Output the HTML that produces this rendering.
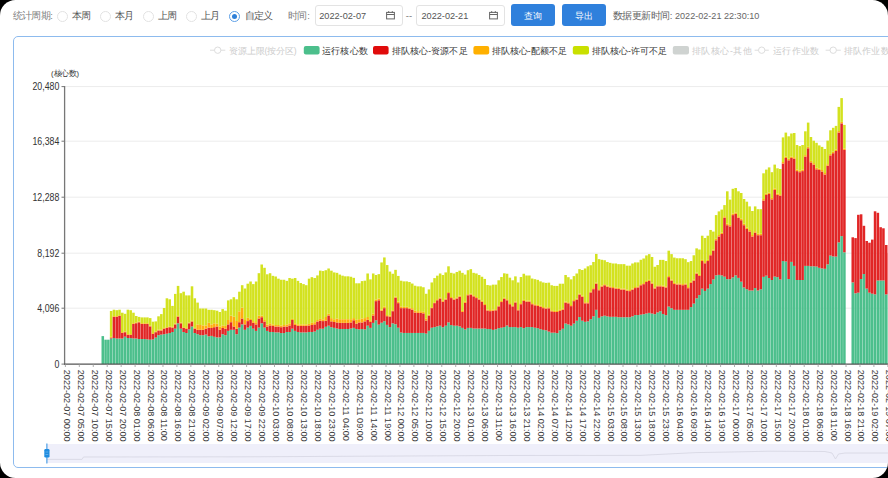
<!DOCTYPE html>
<html><head><meta charset="utf-8">
<style>
html,body{margin:0;padding:0;background:#000;}
#page{position:relative;width:888px;height:478px;overflow:hidden;background:#fff;border-radius:15.5px;font-family:"Liberation Sans",sans-serif;}
.radio{position:absolute;width:9px;height:9px;border:1px solid #e2e2e2;border-radius:50%;top:10.5px;background:#fff;}
.radio.on{border-color:#5d9fe6;}
.radio.on::after{content:"";position:absolute;left:2px;top:2px;width:5px;height:5px;border-radius:50%;background:#2f80d8;}
.inp{position:absolute;top:4.5px;height:19px;border:1px solid #e3e3e3;border-radius:3px;background:#fff;}
.btn{position:absolute;top:4.3px;height:21.4px;background:#2f80dc;border-radius:3px;}
svg text{font-family:"Liberation Sans",sans-serif;}
</style></head><body>
<div id="page">
<div class="radio" style="left:57.4px"></div>
<div class="radio" style="left:99.7px"></div>
<div class="radio" style="left:143px"></div>
<div class="radio" style="left:186px"></div>
<div class="radio on" style="left:228.7px"></div>
<div class="inp" style="left:314.6px;width:86px"></div>
<div class="inp" style="left:416.4px;width:86.5px"></div>
<svg style="position:absolute;left:386px;top:11px" width="9" height="8.5" viewBox="0 0 9 8.5"><rect x="0.6" y="1.4" width="7.8" height="6.5" fill="none" stroke="#666" stroke-width="1"/><line x1="0.6" y1="3.5" x2="8.4" y2="3.5" stroke="#666" stroke-width="1"/><line x1="2.7" y1="0" x2="2.7" y2="2" stroke="#666" stroke-width="0.9"/><line x1="6.3" y1="0" x2="6.3" y2="2" stroke="#666" stroke-width="0.9"/></svg>
<svg style="position:absolute;left:488.8px;top:11px" width="9" height="8.5" viewBox="0 0 9 8.5"><rect x="0.6" y="1.4" width="7.8" height="6.5" fill="none" stroke="#666" stroke-width="1"/><line x1="0.6" y1="3.5" x2="8.4" y2="3.5" stroke="#666" stroke-width="1"/><line x1="2.7" y1="0" x2="2.7" y2="2" stroke="#666" stroke-width="0.9"/><line x1="6.3" y1="0" x2="6.3" y2="2" stroke="#666" stroke-width="0.9"/></svg>
<div class="btn" style="left:511.4px;width:43.8px"></div>
<div class="btn" style="left:561.8px;width:43.9px"></div>
<div style="position:absolute;left:13px;top:35.5px;width:900px;height:430.7px;border:1.3px solid #8dbbee;border-radius:5px;"></div>
<svg style="position:absolute;left:0;top:0" width="888" height="478" viewBox="0 0 888 478">
<text x="12.70 22.09 31.48 40.87 50.26" y="19.4" font-size="9.5" fill="#808080" >统计周期:</text><text x="71.80 81.49" y="19.4" font-size="9.5" fill="#555" >本周</text><text x="114.90 124.12" y="19.4" font-size="9.5" fill="#555" >本月</text><text x="157.70 167.39" y="19.4" font-size="9.5" fill="#555" >上周</text><text x="200.80 210.02" y="19.4" font-size="9.5" fill="#555" >上月</text><text x="244.70 253.71 262.71" y="19.4" font-size="9.5" fill="#555" >自定义</text><text x="287.60 297.47 307.35" y="19.4" font-size="9.5" fill="#808080" >时间:</text><text x="319.2" y="19.1" font-size="9.3" fill="#555" textLength="46.9" lengthAdjust="spacingAndGlyphs">2022-02-07</text><text x="405.8" y="18.6" font-size="9.5" fill="#777">--</text><text x="421.5" y="19.1" font-size="9.3" fill="#555" textLength="46.8" lengthAdjust="spacingAndGlyphs">2022-02-21</text><text x="524.00 533.27" y="18.6" font-size="8.8" fill="#fff" >查询</text><text x="574.50 584.14" y="18.6" font-size="8.8" fill="#fff" >导出</text><text x="612.50 622.05 631.61 641.16 650.71 660.27 669.82" y="19.4" font-size="9.5" fill="#666" >数据更新时间:</text><text x="675" y="19.1" font-size="9.3" fill="#666" textLength="84.3" lengthAdjust="spacingAndGlyphs">2022-02-21 22:30:10</text>
<line x1="210" y1="50.2" x2="225.3" y2="50.2" stroke="#ddd" stroke-width="1"/><circle cx="217.7" cy="50.2" r="3.2" fill="#fff" stroke="#ddd"/><text x="229.40 238.18 246.97 255.75 264.54 267.46 276.25 285.03 293.81" y="53.5" font-size="8.6" fill="#ccc" >资源上限(按分区)</text><rect x="303.8" y="46" width="15.8" height="8.5" rx="2" fill="#4cbf8c"/><text x="322.00 331.19 340.37 349.56 358.75" y="53.5" font-size="8.6" fill="#333" >运行核心数</text><rect x="373" y="46" width="15.6" height="8.5" rx="2" fill="#e00b0b"/><text x="391.90 400.99 410.08 419.16 428.25 431.28 440.36 449.45 458.54" y="53.5" font-size="8.6" fill="#333" >排队核心-资源不足</text><rect x="473.4" y="46" width="15.8" height="8.5" rx="2" fill="#ffb000"/><text x="491.60 500.66 509.73 518.79 527.85 530.87 539.93 549.00 558.06" y="53.5" font-size="8.6" fill="#333" >排队核心-配额不足</text><rect x="572.8" y="46" width="16.2" height="8.5" rx="2" fill="#c9e000"/><text x="591.70 600.79 609.88 618.96 628.05 631.08 640.16 649.25 658.34" y="53.5" font-size="8.6" fill="#333" >排队核心-许可不足</text><rect x="672.8" y="46" width="16.2" height="8.5" rx="2" fill="#cfd3d1"/><text x="691.60 701.20 710.79 720.39 729.98 733.18 742.77" y="53.5" font-size="8.6" fill="#ccc" >排队核心-其他</text><line x1="754.6" y1="50.2" x2="768.8" y2="50.2" stroke="#ddd" stroke-width="1"/><circle cx="761.7" cy="50.2" r="3.2" fill="#fff" stroke="#ddd"/><text x="773.30 782.49 791.67 800.86 810.05" y="53.5" font-size="8.6" fill="#ccc" >运行作业数</text><line x1="825.6" y1="50.2" x2="840.8" y2="50.2" stroke="#ddd" stroke-width="1"/><circle cx="833.2" cy="50.2" r="3.2" fill="#fff" stroke="#ddd"/><text x="843.80 852.99 862.17 871.36 880.55" y="53.5" font-size="8.6" fill="#ccc" >排队作业数</text>
<text x="51.00 53.54 61.17 68.81 76.44" y="75.7" font-size="7.6" fill="#333" >(核心数)</text>
<line x1="65" y1="308.2" x2="888" y2="308.2" stroke="#ececec" stroke-width="1"/><line x1="65" y1="253.2" x2="888" y2="253.2" stroke="#ececec" stroke-width="1"/><line x1="65" y1="197.2" x2="888" y2="197.2" stroke="#ececec" stroke-width="1"/><line x1="65" y1="141.2" x2="888" y2="141.2" stroke="#ececec" stroke-width="1"/><line x1="65" y1="86.6" x2="888" y2="86.6" stroke="#ececec" stroke-width="1"/>
<g font-size="8.8" fill="#333"><text transform="translate(59.3,367.7) scale(1,1.15)" text-anchor="end">0</text><line x1="61.5" y1="364.1" x2="64.6" y2="364.1" stroke="#777" stroke-width="1"/><text transform="translate(59.3,311.8) scale(1,1.15)" text-anchor="end">4,096</text><line x1="61.5" y1="308.2" x2="64.6" y2="308.2" stroke="#777" stroke-width="1"/><text transform="translate(59.3,256.8) scale(1,1.15)" text-anchor="end">8,192</text><line x1="61.5" y1="253.2" x2="64.6" y2="253.2" stroke="#777" stroke-width="1"/><text transform="translate(59.3,200.8) scale(1,1.15)" text-anchor="end">12,288</text><line x1="61.5" y1="197.2" x2="64.6" y2="197.2" stroke="#777" stroke-width="1"/><text transform="translate(59.3,144.8) scale(1,1.15)" text-anchor="end">16,384</text><line x1="61.5" y1="141.2" x2="64.6" y2="141.2" stroke="#777" stroke-width="1"/><text transform="translate(59.3,90.2) scale(1,1.15)" text-anchor="end">20,480</text><line x1="61.5" y1="86.6" x2="64.6" y2="86.6" stroke="#777" stroke-width="1"/></g>
<rect x="101.51" y="336.10" width="2.55" height="28.00" fill="#4cbf8c"/>
<rect x="104.30" y="339.70" width="2.55" height="24.40" fill="#4cbf8c"/>
<rect x="107.09" y="339.70" width="2.55" height="24.40" fill="#4cbf8c"/>
<rect x="109.88" y="338.50" width="2.55" height="25.60" fill="#4cbf8c"/>
<rect x="109.88" y="337.60" width="2.55" height="0.90" fill="#e12626"/>
<rect x="109.88" y="336.80" width="2.55" height="0.80" fill="#ffad0f"/>
<rect x="109.88" y="311.00" width="2.55" height="25.80" fill="#d3e21f"/>
<rect x="112.66" y="338.00" width="2.55" height="26.10" fill="#4cbf8c"/>
<rect x="112.66" y="316.90" width="2.55" height="21.10" fill="#e12626"/>
<rect x="112.66" y="316.10" width="2.55" height="0.80" fill="#ffad0f"/>
<rect x="112.66" y="309.70" width="2.55" height="6.40" fill="#d3e21f"/>
<rect x="115.45" y="338.50" width="2.55" height="25.60" fill="#4cbf8c"/>
<rect x="115.45" y="316.90" width="2.55" height="21.60" fill="#e12626"/>
<rect x="115.45" y="316.10" width="2.55" height="0.80" fill="#ffad0f"/>
<rect x="115.45" y="310.20" width="2.55" height="5.90" fill="#d3e21f"/>
<rect x="118.24" y="338.50" width="2.55" height="25.60" fill="#4cbf8c"/>
<rect x="118.24" y="316.00" width="2.55" height="22.50" fill="#e12626"/>
<rect x="118.24" y="315.20" width="2.55" height="0.80" fill="#ffad0f"/>
<rect x="118.24" y="309.70" width="2.55" height="5.50" fill="#d3e21f"/>
<rect x="121.03" y="338.50" width="2.55" height="25.60" fill="#4cbf8c"/>
<rect x="121.03" y="333.00" width="2.55" height="5.50" fill="#e12626"/>
<rect x="121.03" y="332.20" width="2.55" height="0.80" fill="#ffad0f"/>
<rect x="121.03" y="312.70" width="2.55" height="19.50" fill="#d3e21f"/>
<rect x="123.82" y="336.70" width="2.55" height="27.40" fill="#4cbf8c"/>
<rect x="123.82" y="332.20" width="2.55" height="4.50" fill="#e12626"/>
<rect x="123.82" y="331.40" width="2.55" height="0.80" fill="#ffad0f"/>
<rect x="123.82" y="313.80" width="2.55" height="17.60" fill="#d3e21f"/>
<rect x="126.61" y="338.00" width="2.55" height="26.10" fill="#4cbf8c"/>
<rect x="126.61" y="334.90" width="2.55" height="3.10" fill="#e12626"/>
<rect x="126.61" y="334.10" width="2.55" height="0.80" fill="#ffad0f"/>
<rect x="126.61" y="309.70" width="2.55" height="24.40" fill="#d3e21f"/>
<rect x="129.39" y="338.10" width="2.55" height="26.00" fill="#4cbf8c"/>
<rect x="129.39" y="334.90" width="2.55" height="3.20" fill="#e12626"/>
<rect x="129.39" y="334.10" width="2.55" height="0.80" fill="#ffad0f"/>
<rect x="129.39" y="310.20" width="2.55" height="23.90" fill="#d3e21f"/>
<rect x="132.18" y="338.50" width="2.55" height="25.60" fill="#4cbf8c"/>
<rect x="132.18" y="324.00" width="2.55" height="14.50" fill="#e12626"/>
<rect x="132.18" y="323.20" width="2.55" height="0.80" fill="#ffad0f"/>
<rect x="132.18" y="312.70" width="2.55" height="10.50" fill="#d3e21f"/>
<rect x="134.97" y="338.50" width="2.55" height="25.60" fill="#4cbf8c"/>
<rect x="134.97" y="323.20" width="2.55" height="15.30" fill="#e12626"/>
<rect x="134.97" y="322.40" width="2.55" height="0.80" fill="#ffad0f"/>
<rect x="134.97" y="316.00" width="2.55" height="6.40" fill="#d3e21f"/>
<rect x="137.76" y="339.00" width="2.55" height="25.10" fill="#4cbf8c"/>
<rect x="137.76" y="322.30" width="2.55" height="16.70" fill="#e12626"/>
<rect x="137.76" y="321.50" width="2.55" height="0.80" fill="#ffad0f"/>
<rect x="137.76" y="316.90" width="2.55" height="4.60" fill="#d3e21f"/>
<rect x="140.54" y="339.00" width="2.55" height="25.10" fill="#4cbf8c"/>
<rect x="140.54" y="324.00" width="2.55" height="15.00" fill="#e12626"/>
<rect x="140.54" y="323.20" width="2.55" height="0.80" fill="#ffad0f"/>
<rect x="140.54" y="317.40" width="2.55" height="5.80" fill="#d3e21f"/>
<rect x="143.33" y="339.00" width="2.55" height="25.10" fill="#4cbf8c"/>
<rect x="143.33" y="324.00" width="2.55" height="15.00" fill="#e12626"/>
<rect x="143.33" y="323.20" width="2.55" height="0.80" fill="#ffad0f"/>
<rect x="143.33" y="317.40" width="2.55" height="5.80" fill="#d3e21f"/>
<rect x="146.12" y="339.40" width="2.55" height="24.70" fill="#4cbf8c"/>
<rect x="146.12" y="324.00" width="2.55" height="15.40" fill="#e12626"/>
<rect x="146.12" y="323.20" width="2.55" height="0.80" fill="#ffad0f"/>
<rect x="146.12" y="317.40" width="2.55" height="5.80" fill="#d3e21f"/>
<rect x="148.91" y="339.70" width="2.55" height="24.40" fill="#4cbf8c"/>
<rect x="148.91" y="326.40" width="2.55" height="13.30" fill="#e12626"/>
<rect x="148.91" y="325.60" width="2.55" height="0.80" fill="#ffad0f"/>
<rect x="148.91" y="318.10" width="2.55" height="7.50" fill="#d3e21f"/>
<rect x="151.70" y="339.40" width="2.55" height="24.70" fill="#4cbf8c"/>
<rect x="151.70" y="334.00" width="2.55" height="5.40" fill="#e12626"/>
<rect x="151.70" y="333.20" width="2.55" height="0.80" fill="#ffad0f"/>
<rect x="151.70" y="321.70" width="2.55" height="11.50" fill="#d3e21f"/>
<rect x="154.48" y="337.60" width="2.55" height="26.50" fill="#4cbf8c"/>
<rect x="154.48" y="332.20" width="2.55" height="5.40" fill="#e12626"/>
<rect x="154.48" y="331.40" width="2.55" height="0.80" fill="#ffad0f"/>
<rect x="154.48" y="321.40" width="2.55" height="10.00" fill="#d3e21f"/>
<rect x="157.27" y="335.20" width="2.55" height="28.90" fill="#4cbf8c"/>
<rect x="157.27" y="330.50" width="2.55" height="4.70" fill="#e12626"/>
<rect x="157.27" y="329.70" width="2.55" height="0.80" fill="#ffad0f"/>
<rect x="157.27" y="316.30" width="2.55" height="13.40" fill="#d3e21f"/>
<rect x="160.06" y="334.60" width="2.55" height="29.50" fill="#4cbf8c"/>
<rect x="160.06" y="330.50" width="2.55" height="4.10" fill="#e12626"/>
<rect x="160.06" y="329.70" width="2.55" height="0.80" fill="#ffad0f"/>
<rect x="160.06" y="314.10" width="2.55" height="15.60" fill="#d3e21f"/>
<rect x="162.85" y="334.20" width="2.55" height="29.90" fill="#4cbf8c"/>
<rect x="162.85" y="328.70" width="2.55" height="5.50" fill="#e12626"/>
<rect x="162.85" y="327.90" width="2.55" height="0.80" fill="#ffad0f"/>
<rect x="162.85" y="308.00" width="2.55" height="19.90" fill="#d3e21f"/>
<rect x="165.64" y="333.70" width="2.55" height="30.40" fill="#4cbf8c"/>
<rect x="165.64" y="328.00" width="2.55" height="5.70" fill="#e12626"/>
<rect x="165.64" y="327.20" width="2.55" height="0.80" fill="#ffad0f"/>
<rect x="165.64" y="298.30" width="2.55" height="28.90" fill="#d3e21f"/>
<rect x="168.42" y="333.00" width="2.55" height="31.10" fill="#4cbf8c"/>
<rect x="168.42" y="327.20" width="2.55" height="5.80" fill="#e12626"/>
<rect x="168.42" y="326.40" width="2.55" height="0.80" fill="#ffad0f"/>
<rect x="168.42" y="299.30" width="2.55" height="27.10" fill="#d3e21f"/>
<rect x="171.21" y="332.00" width="2.55" height="32.10" fill="#4cbf8c"/>
<rect x="171.21" y="327.60" width="2.55" height="4.40" fill="#e12626"/>
<rect x="171.21" y="326.80" width="2.55" height="0.80" fill="#ffad0f"/>
<rect x="171.21" y="305.90" width="2.55" height="20.90" fill="#d3e21f"/>
<rect x="174.00" y="328.70" width="2.55" height="35.40" fill="#4cbf8c"/>
<rect x="174.00" y="324.40" width="2.55" height="4.30" fill="#e12626"/>
<rect x="174.00" y="323.60" width="2.55" height="0.80" fill="#ffad0f"/>
<rect x="174.00" y="293.90" width="2.55" height="29.70" fill="#d3e21f"/>
<rect x="176.79" y="323.30" width="2.55" height="40.80" fill="#4cbf8c"/>
<rect x="176.79" y="316.70" width="2.55" height="6.60" fill="#e12626"/>
<rect x="176.79" y="315.90" width="2.55" height="0.80" fill="#ffad0f"/>
<rect x="176.79" y="285.90" width="2.55" height="30.00" fill="#d3e21f"/>
<rect x="179.58" y="328.70" width="2.55" height="35.40" fill="#4cbf8c"/>
<rect x="179.58" y="323.30" width="2.55" height="5.40" fill="#e12626"/>
<rect x="179.58" y="322.50" width="2.55" height="0.80" fill="#ffad0f"/>
<rect x="179.58" y="293.20" width="2.55" height="29.30" fill="#d3e21f"/>
<rect x="182.36" y="332.00" width="2.55" height="32.10" fill="#4cbf8c"/>
<rect x="182.36" y="328.00" width="2.55" height="4.00" fill="#e12626"/>
<rect x="182.36" y="327.20" width="2.55" height="0.80" fill="#ffad0f"/>
<rect x="182.36" y="291.70" width="2.55" height="35.50" fill="#d3e21f"/>
<rect x="185.15" y="333.00" width="2.55" height="31.10" fill="#4cbf8c"/>
<rect x="185.15" y="328.70" width="2.55" height="4.30" fill="#e12626"/>
<rect x="185.15" y="327.90" width="2.55" height="0.80" fill="#ffad0f"/>
<rect x="185.15" y="295.40" width="2.55" height="32.50" fill="#d3e21f"/>
<rect x="187.94" y="329.40" width="2.55" height="34.70" fill="#4cbf8c"/>
<rect x="187.94" y="323.30" width="2.55" height="6.10" fill="#e12626"/>
<rect x="187.94" y="322.50" width="2.55" height="0.80" fill="#ffad0f"/>
<rect x="187.94" y="295.40" width="2.55" height="27.10" fill="#d3e21f"/>
<rect x="190.73" y="326.50" width="2.55" height="37.60" fill="#4cbf8c"/>
<rect x="190.73" y="321.50" width="2.55" height="5.00" fill="#e12626"/>
<rect x="190.73" y="320.70" width="2.55" height="0.80" fill="#ffad0f"/>
<rect x="190.73" y="286.30" width="2.55" height="34.40" fill="#d3e21f"/>
<rect x="193.52" y="333.00" width="2.55" height="31.10" fill="#4cbf8c"/>
<rect x="193.52" y="328.70" width="2.55" height="4.30" fill="#e12626"/>
<rect x="193.52" y="327.90" width="2.55" height="0.80" fill="#ffad0f"/>
<rect x="193.52" y="298.30" width="2.55" height="29.60" fill="#d3e21f"/>
<rect x="196.31" y="334.20" width="2.55" height="29.90" fill="#4cbf8c"/>
<rect x="196.31" y="329.80" width="2.55" height="4.40" fill="#e12626"/>
<rect x="196.31" y="324.40" width="2.55" height="5.40" fill="#ffad0f"/>
<rect x="196.31" y="302.60" width="2.55" height="21.80" fill="#d3e21f"/>
<rect x="199.09" y="335.20" width="2.55" height="28.90" fill="#4cbf8c"/>
<rect x="199.09" y="329.80" width="2.55" height="5.40" fill="#e12626"/>
<rect x="199.09" y="325.00" width="2.55" height="4.80" fill="#ffad0f"/>
<rect x="199.09" y="308.50" width="2.55" height="16.50" fill="#d3e21f"/>
<rect x="201.88" y="335.20" width="2.55" height="28.90" fill="#4cbf8c"/>
<rect x="201.88" y="329.80" width="2.55" height="5.40" fill="#e12626"/>
<rect x="201.88" y="325.40" width="2.55" height="4.40" fill="#ffad0f"/>
<rect x="201.88" y="308.50" width="2.55" height="16.90" fill="#d3e21f"/>
<rect x="204.67" y="334.60" width="2.55" height="29.50" fill="#4cbf8c"/>
<rect x="204.67" y="328.70" width="2.55" height="5.90" fill="#e12626"/>
<rect x="204.67" y="325.40" width="2.55" height="3.30" fill="#ffad0f"/>
<rect x="204.67" y="308.50" width="2.55" height="16.90" fill="#d3e21f"/>
<rect x="207.46" y="336.30" width="2.55" height="27.80" fill="#4cbf8c"/>
<rect x="207.46" y="327.60" width="2.55" height="8.70" fill="#e12626"/>
<rect x="207.46" y="322.80" width="2.55" height="4.80" fill="#ffad0f"/>
<rect x="207.46" y="309.80" width="2.55" height="13.00" fill="#d3e21f"/>
<rect x="210.25" y="335.90" width="2.55" height="28.20" fill="#4cbf8c"/>
<rect x="210.25" y="328.00" width="2.55" height="7.90" fill="#e12626"/>
<rect x="210.25" y="324.40" width="2.55" height="3.60" fill="#ffad0f"/>
<rect x="210.25" y="309.80" width="2.55" height="14.60" fill="#d3e21f"/>
<rect x="213.03" y="336.80" width="2.55" height="27.30" fill="#4cbf8c"/>
<rect x="213.03" y="327.20" width="2.55" height="9.60" fill="#e12626"/>
<rect x="213.03" y="323.30" width="2.55" height="3.90" fill="#ffad0f"/>
<rect x="213.03" y="310.20" width="2.55" height="13.10" fill="#d3e21f"/>
<rect x="215.82" y="337.40" width="2.55" height="26.70" fill="#4cbf8c"/>
<rect x="215.82" y="326.50" width="2.55" height="10.90" fill="#e12626"/>
<rect x="215.82" y="323.70" width="2.55" height="2.80" fill="#ffad0f"/>
<rect x="215.82" y="310.70" width="2.55" height="13.00" fill="#d3e21f"/>
<rect x="218.61" y="337.40" width="2.55" height="26.70" fill="#4cbf8c"/>
<rect x="218.61" y="329.80" width="2.55" height="7.60" fill="#e12626"/>
<rect x="218.61" y="326.50" width="2.55" height="3.30" fill="#ffad0f"/>
<rect x="218.61" y="312.00" width="2.55" height="14.50" fill="#d3e21f"/>
<rect x="221.40" y="334.20" width="2.55" height="29.90" fill="#4cbf8c"/>
<rect x="221.40" y="328.00" width="2.55" height="6.20" fill="#e12626"/>
<rect x="221.40" y="325.40" width="2.55" height="2.60" fill="#ffad0f"/>
<rect x="221.40" y="309.10" width="2.55" height="16.30" fill="#d3e21f"/>
<rect x="224.19" y="335.20" width="2.55" height="28.90" fill="#4cbf8c"/>
<rect x="224.19" y="328.70" width="2.55" height="6.50" fill="#e12626"/>
<rect x="224.19" y="325.90" width="2.55" height="2.80" fill="#ffad0f"/>
<rect x="224.19" y="310.70" width="2.55" height="15.20" fill="#d3e21f"/>
<rect x="226.97" y="330.90" width="2.55" height="33.20" fill="#4cbf8c"/>
<rect x="226.97" y="324.40" width="2.55" height="6.50" fill="#e12626"/>
<rect x="226.97" y="320.00" width="2.55" height="4.40" fill="#ffad0f"/>
<rect x="226.97" y="300.40" width="2.55" height="19.60" fill="#d3e21f"/>
<rect x="229.76" y="329.80" width="2.55" height="34.30" fill="#4cbf8c"/>
<rect x="229.76" y="322.20" width="2.55" height="7.60" fill="#e12626"/>
<rect x="229.76" y="315.70" width="2.55" height="6.50" fill="#ffad0f"/>
<rect x="229.76" y="299.30" width="2.55" height="16.40" fill="#d3e21f"/>
<rect x="232.55" y="329.80" width="2.55" height="34.30" fill="#4cbf8c"/>
<rect x="232.55" y="326.50" width="2.55" height="3.30" fill="#e12626"/>
<rect x="232.55" y="316.70" width="2.55" height="9.80" fill="#ffad0f"/>
<rect x="232.55" y="297.20" width="2.55" height="19.50" fill="#d3e21f"/>
<rect x="235.34" y="334.20" width="2.55" height="29.90" fill="#4cbf8c"/>
<rect x="235.34" y="328.70" width="2.55" height="5.50" fill="#e12626"/>
<rect x="235.34" y="321.00" width="2.55" height="7.70" fill="#ffad0f"/>
<rect x="235.34" y="299.30" width="2.55" height="21.70" fill="#d3e21f"/>
<rect x="238.12" y="327.60" width="2.55" height="36.50" fill="#4cbf8c"/>
<rect x="238.12" y="322.20" width="2.55" height="5.40" fill="#e12626"/>
<rect x="238.12" y="311.30" width="2.55" height="10.90" fill="#ffad0f"/>
<rect x="238.12" y="291.70" width="2.55" height="19.60" fill="#d3e21f"/>
<rect x="240.91" y="324.40" width="2.55" height="39.70" fill="#4cbf8c"/>
<rect x="240.91" y="318.50" width="2.55" height="5.90" fill="#e12626"/>
<rect x="240.91" y="307.60" width="2.55" height="10.90" fill="#ffad0f"/>
<rect x="240.91" y="285.20" width="2.55" height="22.40" fill="#d3e21f"/>
<rect x="243.70" y="329.80" width="2.55" height="34.30" fill="#4cbf8c"/>
<rect x="243.70" y="324.40" width="2.55" height="5.40" fill="#e12626"/>
<rect x="243.70" y="320.00" width="2.55" height="4.40" fill="#ffad0f"/>
<rect x="243.70" y="288.50" width="2.55" height="31.50" fill="#d3e21f"/>
<rect x="246.49" y="327.60" width="2.55" height="36.50" fill="#4cbf8c"/>
<rect x="246.49" y="321.10" width="2.55" height="6.50" fill="#e12626"/>
<rect x="246.49" y="317.80" width="2.55" height="3.30" fill="#ffad0f"/>
<rect x="246.49" y="283.70" width="2.55" height="34.10" fill="#d3e21f"/>
<rect x="249.28" y="325.90" width="2.55" height="38.20" fill="#4cbf8c"/>
<rect x="249.28" y="320.00" width="2.55" height="5.90" fill="#e12626"/>
<rect x="249.28" y="318.90" width="2.55" height="1.10" fill="#ffad0f"/>
<rect x="249.28" y="281.50" width="2.55" height="37.40" fill="#d3e21f"/>
<rect x="252.06" y="328.70" width="2.55" height="35.40" fill="#4cbf8c"/>
<rect x="252.06" y="322.80" width="2.55" height="5.90" fill="#e12626"/>
<rect x="252.06" y="321.10" width="2.55" height="1.70" fill="#ffad0f"/>
<rect x="252.06" y="284.10" width="2.55" height="37.00" fill="#d3e21f"/>
<rect x="254.85" y="330.90" width="2.55" height="33.20" fill="#4cbf8c"/>
<rect x="254.85" y="324.40" width="2.55" height="6.50" fill="#e12626"/>
<rect x="254.85" y="322.20" width="2.55" height="2.20" fill="#ffad0f"/>
<rect x="254.85" y="281.50" width="2.55" height="40.70" fill="#d3e21f"/>
<rect x="257.64" y="327.60" width="2.55" height="36.50" fill="#4cbf8c"/>
<rect x="257.64" y="318.50" width="2.55" height="9.10" fill="#e12626"/>
<rect x="257.64" y="315.70" width="2.55" height="2.80" fill="#ffad0f"/>
<rect x="257.64" y="273.20" width="2.55" height="42.50" fill="#d3e21f"/>
<rect x="260.43" y="323.30" width="2.55" height="40.80" fill="#4cbf8c"/>
<rect x="260.43" y="317.20" width="2.55" height="6.10" fill="#e12626"/>
<rect x="260.43" y="315.70" width="2.55" height="1.50" fill="#ffad0f"/>
<rect x="260.43" y="264.50" width="2.55" height="51.20" fill="#d3e21f"/>
<rect x="263.22" y="327.60" width="2.55" height="36.50" fill="#4cbf8c"/>
<rect x="263.22" y="321.50" width="2.55" height="6.10" fill="#e12626"/>
<rect x="263.22" y="320.00" width="2.55" height="1.50" fill="#ffad0f"/>
<rect x="263.22" y="267.80" width="2.55" height="52.20" fill="#d3e21f"/>
<rect x="266.00" y="330.90" width="2.55" height="33.20" fill="#4cbf8c"/>
<rect x="266.00" y="326.50" width="2.55" height="4.40" fill="#e12626"/>
<rect x="266.00" y="324.50" width="2.55" height="2.00" fill="#ffad0f"/>
<rect x="266.00" y="274.30" width="2.55" height="50.20" fill="#d3e21f"/>
<rect x="268.79" y="331.98" width="2.55" height="32.12" fill="#4cbf8c"/>
<rect x="268.79" y="325.45" width="2.55" height="6.53" fill="#e12626"/>
<rect x="268.79" y="323.27" width="2.55" height="2.18" fill="#ffad0f"/>
<rect x="268.79" y="273.23" width="2.55" height="50.04" fill="#d3e21f"/>
<rect x="271.58" y="331.98" width="2.55" height="32.12" fill="#4cbf8c"/>
<rect x="271.58" y="325.89" width="2.55" height="6.09" fill="#e12626"/>
<rect x="271.58" y="324.36" width="2.55" height="1.52" fill="#ffad0f"/>
<rect x="271.58" y="275.84" width="2.55" height="48.52" fill="#d3e21f"/>
<rect x="274.37" y="332.41" width="2.55" height="31.69" fill="#4cbf8c"/>
<rect x="274.37" y="326.54" width="2.55" height="5.87" fill="#e12626"/>
<rect x="274.37" y="325.01" width="2.55" height="1.52" fill="#ffad0f"/>
<rect x="274.37" y="276.49" width="2.55" height="48.52" fill="#d3e21f"/>
<rect x="277.16" y="332.41" width="2.55" height="31.69" fill="#4cbf8c"/>
<rect x="277.16" y="326.54" width="2.55" height="5.87" fill="#e12626"/>
<rect x="277.16" y="325.01" width="2.55" height="1.52" fill="#ffad0f"/>
<rect x="277.16" y="278.67" width="2.55" height="46.34" fill="#d3e21f"/>
<rect x="279.95" y="333.07" width="2.55" height="31.03" fill="#4cbf8c"/>
<rect x="279.95" y="327.19" width="2.55" height="5.87" fill="#e12626"/>
<rect x="279.95" y="325.45" width="2.55" height="1.74" fill="#ffad0f"/>
<rect x="279.95" y="279.76" width="2.55" height="45.69" fill="#d3e21f"/>
<rect x="282.73" y="333.07" width="2.55" height="31.03" fill="#4cbf8c"/>
<rect x="282.73" y="326.54" width="2.55" height="6.53" fill="#e12626"/>
<rect x="282.73" y="325.01" width="2.55" height="1.52" fill="#ffad0f"/>
<rect x="282.73" y="279.76" width="2.55" height="45.26" fill="#d3e21f"/>
<rect x="285.52" y="331.98" width="2.55" height="32.12" fill="#4cbf8c"/>
<rect x="285.52" y="326.54" width="2.55" height="5.44" fill="#e12626"/>
<rect x="285.52" y="324.36" width="2.55" height="2.18" fill="#ffad0f"/>
<rect x="285.52" y="280.85" width="2.55" height="43.52" fill="#d3e21f"/>
<rect x="288.31" y="331.98" width="2.55" height="32.12" fill="#4cbf8c"/>
<rect x="288.31" y="325.45" width="2.55" height="6.53" fill="#e12626"/>
<rect x="288.31" y="323.27" width="2.55" height="2.18" fill="#ffad0f"/>
<rect x="288.31" y="278.02" width="2.55" height="45.26" fill="#d3e21f"/>
<rect x="291.10" y="328.71" width="2.55" height="35.39" fill="#4cbf8c"/>
<rect x="291.10" y="320.01" width="2.55" height="8.70" fill="#e12626"/>
<rect x="291.10" y="318.92" width="2.55" height="1.09" fill="#ffad0f"/>
<rect x="291.10" y="278.67" width="2.55" height="40.25" fill="#d3e21f"/>
<rect x="293.88" y="330.89" width="2.55" height="33.21" fill="#4cbf8c"/>
<rect x="293.88" y="325.01" width="2.55" height="5.87" fill="#e12626"/>
<rect x="293.88" y="323.27" width="2.55" height="1.74" fill="#ffad0f"/>
<rect x="293.88" y="278.02" width="2.55" height="45.26" fill="#d3e21f"/>
<rect x="296.67" y="331.98" width="2.55" height="32.12" fill="#4cbf8c"/>
<rect x="296.67" y="325.89" width="2.55" height="6.09" fill="#e12626"/>
<rect x="296.67" y="324.36" width="2.55" height="1.52" fill="#ffad0f"/>
<rect x="296.67" y="280.85" width="2.55" height="43.52" fill="#d3e21f"/>
<rect x="299.46" y="332.41" width="2.55" height="31.69" fill="#4cbf8c"/>
<rect x="299.46" y="325.89" width="2.55" height="6.53" fill="#e12626"/>
<rect x="299.46" y="324.36" width="2.55" height="1.52" fill="#ffad0f"/>
<rect x="299.46" y="283.02" width="2.55" height="41.34" fill="#d3e21f"/>
<rect x="302.25" y="332.41" width="2.55" height="31.69" fill="#4cbf8c"/>
<rect x="302.25" y="325.89" width="2.55" height="6.53" fill="#e12626"/>
<rect x="302.25" y="324.36" width="2.55" height="1.52" fill="#ffad0f"/>
<rect x="302.25" y="284.11" width="2.55" height="40.25" fill="#d3e21f"/>
<rect x="305.04" y="332.41" width="2.55" height="31.69" fill="#4cbf8c"/>
<rect x="305.04" y="325.89" width="2.55" height="6.53" fill="#e12626"/>
<rect x="305.04" y="324.36" width="2.55" height="1.52" fill="#ffad0f"/>
<rect x="305.04" y="285.20" width="2.55" height="39.16" fill="#d3e21f"/>
<rect x="307.83" y="331.98" width="2.55" height="32.12" fill="#4cbf8c"/>
<rect x="307.83" y="325.45" width="2.55" height="6.53" fill="#e12626"/>
<rect x="307.83" y="323.93" width="2.55" height="1.52" fill="#ffad0f"/>
<rect x="307.83" y="278.67" width="2.55" height="45.26" fill="#d3e21f"/>
<rect x="310.61" y="331.98" width="2.55" height="32.12" fill="#4cbf8c"/>
<rect x="310.61" y="325.01" width="2.55" height="6.96" fill="#e12626"/>
<rect x="310.61" y="322.84" width="2.55" height="2.18" fill="#ffad0f"/>
<rect x="310.61" y="277.15" width="2.55" height="45.69" fill="#d3e21f"/>
<rect x="313.40" y="331.54" width="2.55" height="32.56" fill="#4cbf8c"/>
<rect x="313.40" y="324.36" width="2.55" height="7.18" fill="#e12626"/>
<rect x="313.40" y="322.19" width="2.55" height="2.18" fill="#ffad0f"/>
<rect x="313.40" y="278.02" width="2.55" height="44.17" fill="#d3e21f"/>
<rect x="316.19" y="329.80" width="2.55" height="34.30" fill="#4cbf8c"/>
<rect x="316.19" y="321.53" width="2.55" height="8.27" fill="#e12626"/>
<rect x="316.19" y="320.01" width="2.55" height="1.52" fill="#ffad0f"/>
<rect x="316.19" y="275.41" width="2.55" height="44.60" fill="#d3e21f"/>
<rect x="318.98" y="328.71" width="2.55" height="35.39" fill="#4cbf8c"/>
<rect x="318.98" y="320.66" width="2.55" height="8.05" fill="#e12626"/>
<rect x="318.98" y="318.92" width="2.55" height="1.74" fill="#ffad0f"/>
<rect x="318.98" y="270.62" width="2.55" height="48.30" fill="#d3e21f"/>
<rect x="321.76" y="328.71" width="2.55" height="35.39" fill="#4cbf8c"/>
<rect x="321.76" y="321.10" width="2.55" height="7.62" fill="#e12626"/>
<rect x="321.76" y="319.36" width="2.55" height="1.74" fill="#ffad0f"/>
<rect x="321.76" y="271.05" width="2.55" height="48.30" fill="#d3e21f"/>
<rect x="324.55" y="326.80" width="2.55" height="37.30" fill="#4cbf8c"/>
<rect x="324.55" y="320.71" width="2.55" height="6.09" fill="#e12626"/>
<rect x="324.55" y="317.01" width="2.55" height="3.70" fill="#ffad0f"/>
<rect x="324.55" y="270.23" width="2.55" height="46.78" fill="#d3e21f"/>
<rect x="327.34" y="325.71" width="2.55" height="38.39" fill="#4cbf8c"/>
<rect x="327.34" y="315.49" width="2.55" height="10.23" fill="#e12626"/>
<rect x="327.34" y="313.75" width="2.55" height="1.74" fill="#ffad0f"/>
<rect x="327.34" y="268.49" width="2.55" height="45.26" fill="#d3e21f"/>
<rect x="330.13" y="327.24" width="2.55" height="36.86" fill="#4cbf8c"/>
<rect x="330.13" y="321.36" width="2.55" height="5.87" fill="#e12626"/>
<rect x="330.13" y="318.10" width="2.55" height="3.26" fill="#ffad0f"/>
<rect x="330.13" y="270.67" width="2.55" height="47.43" fill="#d3e21f"/>
<rect x="332.92" y="327.89" width="2.55" height="36.21" fill="#4cbf8c"/>
<rect x="332.92" y="322.01" width="2.55" height="5.87" fill="#e12626"/>
<rect x="332.92" y="319.19" width="2.55" height="2.83" fill="#ffad0f"/>
<rect x="332.92" y="272.41" width="2.55" height="46.78" fill="#d3e21f"/>
<rect x="335.71" y="328.54" width="2.55" height="35.56" fill="#4cbf8c"/>
<rect x="335.71" y="322.45" width="2.55" height="6.09" fill="#e12626"/>
<rect x="335.71" y="318.53" width="2.55" height="3.92" fill="#ffad0f"/>
<rect x="335.71" y="272.84" width="2.55" height="45.69" fill="#d3e21f"/>
<rect x="338.49" y="328.98" width="2.55" height="35.12" fill="#4cbf8c"/>
<rect x="338.49" y="322.89" width="2.55" height="6.09" fill="#e12626"/>
<rect x="338.49" y="319.19" width="2.55" height="3.70" fill="#ffad0f"/>
<rect x="338.49" y="274.58" width="2.55" height="44.60" fill="#d3e21f"/>
<rect x="341.28" y="328.98" width="2.55" height="35.12" fill="#4cbf8c"/>
<rect x="341.28" y="322.89" width="2.55" height="6.09" fill="#e12626"/>
<rect x="341.28" y="319.19" width="2.55" height="3.70" fill="#ffad0f"/>
<rect x="341.28" y="275.67" width="2.55" height="43.52" fill="#d3e21f"/>
<rect x="344.07" y="328.98" width="2.55" height="35.12" fill="#4cbf8c"/>
<rect x="344.07" y="322.89" width="2.55" height="6.09" fill="#e12626"/>
<rect x="344.07" y="319.19" width="2.55" height="3.70" fill="#ffad0f"/>
<rect x="344.07" y="276.32" width="2.55" height="42.86" fill="#d3e21f"/>
<rect x="346.86" y="328.98" width="2.55" height="35.12" fill="#4cbf8c"/>
<rect x="346.86" y="322.89" width="2.55" height="6.09" fill="#e12626"/>
<rect x="346.86" y="319.19" width="2.55" height="3.70" fill="#ffad0f"/>
<rect x="346.86" y="276.32" width="2.55" height="42.86" fill="#d3e21f"/>
<rect x="349.64" y="328.54" width="2.55" height="35.56" fill="#4cbf8c"/>
<rect x="349.64" y="322.45" width="2.55" height="6.09" fill="#e12626"/>
<rect x="349.64" y="319.19" width="2.55" height="3.26" fill="#ffad0f"/>
<rect x="349.64" y="276.76" width="2.55" height="42.43" fill="#d3e21f"/>
<rect x="352.43" y="327.89" width="2.55" height="36.21" fill="#4cbf8c"/>
<rect x="352.43" y="320.27" width="2.55" height="7.62" fill="#e12626"/>
<rect x="352.43" y="318.10" width="2.55" height="2.18" fill="#ffad0f"/>
<rect x="352.43" y="277.85" width="2.55" height="40.25" fill="#d3e21f"/>
<rect x="355.22" y="328.98" width="2.55" height="35.12" fill="#4cbf8c"/>
<rect x="355.22" y="323.54" width="2.55" height="5.44" fill="#e12626"/>
<rect x="355.22" y="319.84" width="2.55" height="3.70" fill="#ffad0f"/>
<rect x="355.22" y="283.29" width="2.55" height="36.55" fill="#d3e21f"/>
<rect x="358.01" y="329.41" width="2.55" height="34.69" fill="#4cbf8c"/>
<rect x="358.01" y="322.45" width="2.55" height="6.96" fill="#e12626"/>
<rect x="358.01" y="319.19" width="2.55" height="3.26" fill="#ffad0f"/>
<rect x="358.01" y="283.29" width="2.55" height="35.90" fill="#d3e21f"/>
<rect x="360.80" y="328.98" width="2.55" height="35.12" fill="#4cbf8c"/>
<rect x="360.80" y="322.45" width="2.55" height="6.53" fill="#e12626"/>
<rect x="360.80" y="318.53" width="2.55" height="3.92" fill="#ffad0f"/>
<rect x="360.80" y="281.11" width="2.55" height="37.42" fill="#d3e21f"/>
<rect x="363.59" y="329.41" width="2.55" height="34.69" fill="#4cbf8c"/>
<rect x="363.59" y="321.36" width="2.55" height="8.05" fill="#e12626"/>
<rect x="363.59" y="318.10" width="2.55" height="3.26" fill="#ffad0f"/>
<rect x="363.59" y="280.67" width="2.55" height="37.42" fill="#d3e21f"/>
<rect x="366.37" y="325.71" width="2.55" height="38.39" fill="#4cbf8c"/>
<rect x="366.37" y="319.84" width="2.55" height="5.87" fill="#e12626"/>
<rect x="366.37" y="317.01" width="2.55" height="2.83" fill="#ffad0f"/>
<rect x="366.37" y="273.49" width="2.55" height="43.52" fill="#d3e21f"/>
<rect x="369.16" y="327.89" width="2.55" height="36.21" fill="#4cbf8c"/>
<rect x="369.16" y="322.01" width="2.55" height="5.87" fill="#e12626"/>
<rect x="369.16" y="320.27" width="2.55" height="1.74" fill="#ffad0f"/>
<rect x="369.16" y="279.37" width="2.55" height="40.91" fill="#d3e21f"/>
<rect x="371.95" y="322.89" width="2.55" height="41.21" fill="#4cbf8c"/>
<rect x="371.95" y="315.49" width="2.55" height="7.40" fill="#e12626"/>
<rect x="371.95" y="313.75" width="2.55" height="1.74" fill="#ffad0f"/>
<rect x="371.95" y="273.49" width="2.55" height="40.25" fill="#d3e21f"/>
<rect x="374.74" y="320.27" width="2.55" height="43.83" fill="#4cbf8c"/>
<rect x="374.74" y="301.13" width="2.55" height="19.15" fill="#e12626"/>
<rect x="374.74" y="299.60" width="2.55" height="1.52" fill="#ffad0f"/>
<rect x="374.74" y="275.02" width="2.55" height="24.59" fill="#d3e21f"/>
<rect x="377.52" y="324.63" width="2.55" height="39.47" fill="#4cbf8c"/>
<rect x="377.52" y="300.26" width="2.55" height="24.37" fill="#e12626"/>
<rect x="377.52" y="298.52" width="2.55" height="1.74" fill="#ffad0f"/>
<rect x="377.52" y="274.15" width="2.55" height="24.37" fill="#d3e21f"/>
<rect x="380.31" y="322.71" width="2.55" height="41.39" fill="#4cbf8c"/>
<rect x="380.31" y="310.75" width="2.55" height="11.97" fill="#e12626"/>
<rect x="380.31" y="309.66" width="2.55" height="1.09" fill="#ffad0f"/>
<rect x="380.31" y="262.44" width="2.55" height="47.21" fill="#d3e21f"/>
<rect x="383.10" y="321.19" width="2.55" height="42.91" fill="#4cbf8c"/>
<rect x="383.10" y="308.14" width="2.55" height="13.05" fill="#e12626"/>
<rect x="383.10" y="306.40" width="2.55" height="1.74" fill="#ffad0f"/>
<rect x="383.10" y="257.44" width="2.55" height="48.96" fill="#d3e21f"/>
<rect x="385.89" y="324.89" width="2.55" height="39.21" fill="#4cbf8c"/>
<rect x="385.89" y="316.19" width="2.55" height="8.70" fill="#e12626"/>
<rect x="385.89" y="315.10" width="2.55" height="1.09" fill="#ffad0f"/>
<rect x="385.89" y="265.05" width="2.55" height="50.04" fill="#d3e21f"/>
<rect x="388.68" y="327.07" width="2.55" height="37.03" fill="#4cbf8c"/>
<rect x="388.68" y="316.84" width="2.55" height="10.23" fill="#e12626"/>
<rect x="388.68" y="315.53" width="2.55" height="1.31" fill="#ffad0f"/>
<rect x="388.68" y="271.58" width="2.55" height="43.95" fill="#d3e21f"/>
<rect x="391.47" y="323.37" width="2.55" height="40.73" fill="#4cbf8c"/>
<rect x="391.47" y="311.18" width="2.55" height="12.18" fill="#e12626"/>
<rect x="391.47" y="310.31" width="2.55" height="0.87" fill="#ffad0f"/>
<rect x="391.47" y="273.76" width="2.55" height="36.55" fill="#d3e21f"/>
<rect x="394.25" y="324.24" width="2.55" height="39.86" fill="#4cbf8c"/>
<rect x="394.25" y="297.69" width="2.55" height="26.54" fill="#e12626"/>
<rect x="394.25" y="296.60" width="2.55" height="1.09" fill="#ffad0f"/>
<rect x="394.25" y="269.84" width="2.55" height="26.76" fill="#d3e21f"/>
<rect x="397.04" y="327.72" width="2.55" height="36.38" fill="#4cbf8c"/>
<rect x="397.04" y="303.13" width="2.55" height="24.59" fill="#e12626"/>
<rect x="397.04" y="301.61" width="2.55" height="1.52" fill="#ffad0f"/>
<rect x="397.04" y="275.93" width="2.55" height="25.67" fill="#d3e21f"/>
<rect x="399.83" y="332.50" width="2.55" height="31.60" fill="#4cbf8c"/>
<rect x="399.83" y="308.14" width="2.55" height="24.37" fill="#e12626"/>
<rect x="399.83" y="306.40" width="2.55" height="1.74" fill="#ffad0f"/>
<rect x="399.83" y="280.72" width="2.55" height="25.67" fill="#d3e21f"/>
<rect x="402.62" y="332.94" width="2.55" height="31.16" fill="#4cbf8c"/>
<rect x="402.62" y="308.14" width="2.55" height="24.80" fill="#e12626"/>
<rect x="402.62" y="306.83" width="2.55" height="1.31" fill="#ffad0f"/>
<rect x="402.62" y="281.37" width="2.55" height="25.46" fill="#d3e21f"/>
<rect x="405.40" y="332.94" width="2.55" height="31.16" fill="#4cbf8c"/>
<rect x="405.40" y="308.14" width="2.55" height="24.80" fill="#e12626"/>
<rect x="405.40" y="306.83" width="2.55" height="1.31" fill="#ffad0f"/>
<rect x="405.40" y="281.37" width="2.55" height="25.46" fill="#d3e21f"/>
<rect x="408.19" y="332.94" width="2.55" height="31.16" fill="#4cbf8c"/>
<rect x="408.19" y="308.57" width="2.55" height="24.37" fill="#e12626"/>
<rect x="408.19" y="307.48" width="2.55" height="1.09" fill="#ffad0f"/>
<rect x="408.19" y="282.03" width="2.55" height="25.46" fill="#d3e21f"/>
<rect x="410.98" y="332.94" width="2.55" height="31.16" fill="#4cbf8c"/>
<rect x="410.98" y="309.66" width="2.55" height="23.28" fill="#e12626"/>
<rect x="410.98" y="308.14" width="2.55" height="1.52" fill="#ffad0f"/>
<rect x="410.98" y="283.55" width="2.55" height="24.59" fill="#d3e21f"/>
<rect x="413.77" y="332.94" width="2.55" height="31.16" fill="#4cbf8c"/>
<rect x="413.77" y="312.49" width="2.55" height="20.45" fill="#e12626"/>
<rect x="413.77" y="310.75" width="2.55" height="1.74" fill="#ffad0f"/>
<rect x="413.77" y="285.72" width="2.55" height="25.02" fill="#d3e21f"/>
<rect x="416.56" y="332.94" width="2.55" height="31.16" fill="#4cbf8c"/>
<rect x="416.56" y="312.92" width="2.55" height="20.02" fill="#e12626"/>
<rect x="416.56" y="311.18" width="2.55" height="1.74" fill="#ffad0f"/>
<rect x="416.56" y="286.38" width="2.55" height="24.80" fill="#d3e21f"/>
<rect x="419.35" y="332.94" width="2.55" height="31.16" fill="#4cbf8c"/>
<rect x="419.35" y="312.92" width="2.55" height="20.02" fill="#e12626"/>
<rect x="419.35" y="311.18" width="2.55" height="1.74" fill="#ffad0f"/>
<rect x="419.35" y="286.38" width="2.55" height="24.80" fill="#d3e21f"/>
<rect x="422.13" y="332.94" width="2.55" height="31.16" fill="#4cbf8c"/>
<rect x="422.13" y="313.36" width="2.55" height="19.58" fill="#e12626"/>
<rect x="422.13" y="311.83" width="2.55" height="1.52" fill="#ffad0f"/>
<rect x="422.13" y="287.25" width="2.55" height="24.59" fill="#d3e21f"/>
<rect x="424.92" y="333.59" width="2.55" height="30.51" fill="#4cbf8c"/>
<rect x="424.92" y="320.54" width="2.55" height="13.05" fill="#e12626"/>
<rect x="424.92" y="318.36" width="2.55" height="2.18" fill="#ffad0f"/>
<rect x="424.92" y="293.78" width="2.55" height="24.59" fill="#d3e21f"/>
<rect x="427.71" y="330.76" width="2.55" height="33.34" fill="#4cbf8c"/>
<rect x="427.71" y="315.53" width="2.55" height="15.23" fill="#e12626"/>
<rect x="427.71" y="314.66" width="2.55" height="0.87" fill="#ffad0f"/>
<rect x="427.71" y="289.42" width="2.55" height="25.24" fill="#d3e21f"/>
<rect x="430.50" y="327.72" width="2.55" height="36.38" fill="#4cbf8c"/>
<rect x="430.50" y="308.14" width="2.55" height="19.58" fill="#e12626"/>
<rect x="430.50" y="307.27" width="2.55" height="0.87" fill="#ffad0f"/>
<rect x="430.50" y="282.46" width="2.55" height="24.80" fill="#d3e21f"/>
<rect x="433.28" y="327.07" width="2.55" height="37.03" fill="#4cbf8c"/>
<rect x="433.28" y="303.13" width="2.55" height="23.93" fill="#e12626"/>
<rect x="433.28" y="302.26" width="2.55" height="0.87" fill="#ffad0f"/>
<rect x="433.28" y="278.11" width="2.55" height="24.15" fill="#d3e21f"/>
<rect x="436.07" y="326.37" width="2.55" height="37.73" fill="#4cbf8c"/>
<rect x="436.07" y="300.26" width="2.55" height="26.11" fill="#e12626"/>
<rect x="436.07" y="299.17" width="2.55" height="1.09" fill="#ffad0f"/>
<rect x="436.07" y="275.67" width="2.55" height="23.50" fill="#d3e21f"/>
<rect x="438.86" y="325.71" width="2.55" height="38.39" fill="#4cbf8c"/>
<rect x="438.86" y="298.52" width="2.55" height="27.20" fill="#e12626"/>
<rect x="438.86" y="297.43" width="2.55" height="1.09" fill="#ffad0f"/>
<rect x="438.86" y="273.49" width="2.55" height="23.93" fill="#d3e21f"/>
<rect x="441.65" y="327.24" width="2.55" height="36.86" fill="#4cbf8c"/>
<rect x="441.65" y="301.78" width="2.55" height="25.46" fill="#e12626"/>
<rect x="441.65" y="300.69" width="2.55" height="1.09" fill="#ffad0f"/>
<rect x="441.65" y="275.02" width="2.55" height="25.67" fill="#d3e21f"/>
<rect x="444.44" y="325.71" width="2.55" height="38.39" fill="#4cbf8c"/>
<rect x="444.44" y="299.60" width="2.55" height="26.11" fill="#e12626"/>
<rect x="444.44" y="298.52" width="2.55" height="1.09" fill="#ffad0f"/>
<rect x="444.44" y="272.41" width="2.55" height="26.11" fill="#d3e21f"/>
<rect x="447.23" y="322.45" width="2.55" height="41.65" fill="#4cbf8c"/>
<rect x="447.23" y="293.08" width="2.55" height="29.37" fill="#e12626"/>
<rect x="447.23" y="291.99" width="2.55" height="1.09" fill="#ffad0f"/>
<rect x="447.23" y="266.31" width="2.55" height="25.67" fill="#d3e21f"/>
<rect x="450.01" y="325.06" width="2.55" height="39.04" fill="#4cbf8c"/>
<rect x="450.01" y="298.08" width="2.55" height="26.98" fill="#e12626"/>
<rect x="450.01" y="296.99" width="2.55" height="1.09" fill="#ffad0f"/>
<rect x="450.01" y="272.84" width="2.55" height="24.15" fill="#d3e21f"/>
<rect x="452.80" y="325.71" width="2.55" height="38.39" fill="#4cbf8c"/>
<rect x="452.80" y="299.60" width="2.55" height="26.11" fill="#e12626"/>
<rect x="452.80" y="298.52" width="2.55" height="1.09" fill="#ffad0f"/>
<rect x="452.80" y="273.49" width="2.55" height="25.02" fill="#d3e21f"/>
<rect x="455.59" y="325.71" width="2.55" height="38.39" fill="#4cbf8c"/>
<rect x="455.59" y="298.52" width="2.55" height="27.20" fill="#e12626"/>
<rect x="455.59" y="297.43" width="2.55" height="1.09" fill="#ffad0f"/>
<rect x="455.59" y="271.97" width="2.55" height="25.46" fill="#d3e21f"/>
<rect x="458.38" y="326.37" width="2.55" height="37.73" fill="#4cbf8c"/>
<rect x="458.38" y="296.78" width="2.55" height="29.59" fill="#e12626"/>
<rect x="458.38" y="295.69" width="2.55" height="1.09" fill="#ffad0f"/>
<rect x="458.38" y="270.67" width="2.55" height="25.02" fill="#d3e21f"/>
<rect x="461.16" y="327.89" width="2.55" height="36.21" fill="#4cbf8c"/>
<rect x="461.16" y="312.01" width="2.55" height="15.88" fill="#e12626"/>
<rect x="461.16" y="310.92" width="2.55" height="1.09" fill="#ffad0f"/>
<rect x="461.16" y="272.84" width="2.55" height="38.08" fill="#d3e21f"/>
<rect x="463.95" y="329.41" width="2.55" height="34.69" fill="#4cbf8c"/>
<rect x="463.95" y="302.87" width="2.55" height="26.54" fill="#e12626"/>
<rect x="463.95" y="301.78" width="2.55" height="1.09" fill="#ffad0f"/>
<rect x="463.95" y="274.58" width="2.55" height="27.20" fill="#d3e21f"/>
<rect x="466.74" y="327.89" width="2.55" height="36.21" fill="#4cbf8c"/>
<rect x="466.74" y="295.25" width="2.55" height="32.64" fill="#e12626"/>
<rect x="466.74" y="294.16" width="2.55" height="1.09" fill="#ffad0f"/>
<rect x="466.74" y="270.23" width="2.55" height="23.93" fill="#d3e21f"/>
<rect x="469.53" y="327.89" width="2.55" height="36.21" fill="#4cbf8c"/>
<rect x="469.53" y="294.60" width="2.55" height="33.29" fill="#e12626"/>
<rect x="469.53" y="293.51" width="2.55" height="1.09" fill="#ffad0f"/>
<rect x="469.53" y="269.14" width="2.55" height="24.37" fill="#d3e21f"/>
<rect x="472.32" y="328.54" width="2.55" height="35.56" fill="#4cbf8c"/>
<rect x="472.32" y="296.34" width="2.55" height="32.20" fill="#e12626"/>
<rect x="472.32" y="295.25" width="2.55" height="1.09" fill="#ffad0f"/>
<rect x="472.32" y="272.84" width="2.55" height="22.41" fill="#d3e21f"/>
<rect x="475.11" y="328.54" width="2.55" height="35.56" fill="#4cbf8c"/>
<rect x="475.11" y="298.08" width="2.55" height="30.46" fill="#e12626"/>
<rect x="475.11" y="296.99" width="2.55" height="1.09" fill="#ffad0f"/>
<rect x="475.11" y="273.49" width="2.55" height="23.50" fill="#d3e21f"/>
<rect x="477.89" y="328.54" width="2.55" height="35.56" fill="#4cbf8c"/>
<rect x="477.89" y="299.60" width="2.55" height="28.94" fill="#e12626"/>
<rect x="477.89" y="298.52" width="2.55" height="1.09" fill="#ffad0f"/>
<rect x="477.89" y="275.02" width="2.55" height="23.50" fill="#d3e21f"/>
<rect x="480.68" y="328.54" width="2.55" height="35.56" fill="#4cbf8c"/>
<rect x="480.68" y="301.78" width="2.55" height="26.76" fill="#e12626"/>
<rect x="480.68" y="300.69" width="2.55" height="1.09" fill="#ffad0f"/>
<rect x="480.68" y="276.76" width="2.55" height="23.93" fill="#d3e21f"/>
<rect x="483.47" y="328.54" width="2.55" height="35.56" fill="#4cbf8c"/>
<rect x="483.47" y="305.04" width="2.55" height="23.50" fill="#e12626"/>
<rect x="483.47" y="303.96" width="2.55" height="1.09" fill="#ffad0f"/>
<rect x="483.47" y="278.93" width="2.55" height="25.02" fill="#d3e21f"/>
<rect x="486.26" y="328.98" width="2.55" height="35.12" fill="#4cbf8c"/>
<rect x="486.26" y="310.48" width="2.55" height="18.49" fill="#e12626"/>
<rect x="486.26" y="309.40" width="2.55" height="1.09" fill="#ffad0f"/>
<rect x="486.26" y="285.03" width="2.55" height="24.37" fill="#d3e21f"/>
<rect x="489.04" y="328.98" width="2.55" height="35.12" fill="#4cbf8c"/>
<rect x="489.04" y="311.14" width="2.55" height="17.84" fill="#e12626"/>
<rect x="489.04" y="310.05" width="2.55" height="1.09" fill="#ffad0f"/>
<rect x="489.04" y="285.46" width="2.55" height="24.59" fill="#d3e21f"/>
<rect x="491.83" y="329.89" width="2.55" height="34.21" fill="#4cbf8c"/>
<rect x="491.83" y="310.75" width="2.55" height="19.15" fill="#e12626"/>
<rect x="491.83" y="309.66" width="2.55" height="1.09" fill="#ffad0f"/>
<rect x="491.83" y="284.64" width="2.55" height="25.02" fill="#d3e21f"/>
<rect x="494.62" y="329.24" width="2.55" height="34.86" fill="#4cbf8c"/>
<rect x="494.62" y="310.31" width="2.55" height="18.93" fill="#e12626"/>
<rect x="494.62" y="309.22" width="2.55" height="1.09" fill="#ffad0f"/>
<rect x="494.62" y="284.64" width="2.55" height="24.59" fill="#d3e21f"/>
<rect x="497.41" y="328.15" width="2.55" height="35.95" fill="#4cbf8c"/>
<rect x="497.41" y="306.40" width="2.55" height="21.76" fill="#e12626"/>
<rect x="497.41" y="305.31" width="2.55" height="1.09" fill="#ffad0f"/>
<rect x="497.41" y="280.29" width="2.55" height="25.02" fill="#d3e21f"/>
<rect x="500.20" y="327.72" width="2.55" height="36.38" fill="#4cbf8c"/>
<rect x="500.20" y="302.04" width="2.55" height="25.67" fill="#e12626"/>
<rect x="500.20" y="300.96" width="2.55" height="1.09" fill="#ffad0f"/>
<rect x="500.20" y="277.02" width="2.55" height="23.93" fill="#d3e21f"/>
<rect x="502.99" y="327.07" width="2.55" height="37.03" fill="#4cbf8c"/>
<rect x="502.99" y="298.78" width="2.55" height="28.29" fill="#e12626"/>
<rect x="502.99" y="297.69" width="2.55" height="1.09" fill="#ffad0f"/>
<rect x="502.99" y="273.32" width="2.55" height="24.37" fill="#d3e21f"/>
<rect x="505.77" y="325.54" width="2.55" height="38.56" fill="#4cbf8c"/>
<rect x="505.77" y="300.30" width="2.55" height="25.24" fill="#e12626"/>
<rect x="505.77" y="299.21" width="2.55" height="1.09" fill="#ffad0f"/>
<rect x="505.77" y="273.76" width="2.55" height="25.46" fill="#d3e21f"/>
<rect x="508.56" y="327.07" width="2.55" height="37.03" fill="#4cbf8c"/>
<rect x="508.56" y="304.22" width="2.55" height="22.85" fill="#e12626"/>
<rect x="508.56" y="303.13" width="2.55" height="1.09" fill="#ffad0f"/>
<rect x="508.56" y="277.67" width="2.55" height="25.46" fill="#d3e21f"/>
<rect x="511.35" y="327.07" width="2.55" height="37.03" fill="#4cbf8c"/>
<rect x="511.35" y="306.40" width="2.55" height="20.67" fill="#e12626"/>
<rect x="511.35" y="305.31" width="2.55" height="1.09" fill="#ffad0f"/>
<rect x="511.35" y="280.29" width="2.55" height="25.02" fill="#d3e21f"/>
<rect x="514.14" y="327.07" width="2.55" height="37.03" fill="#4cbf8c"/>
<rect x="514.14" y="302.48" width="2.55" height="24.59" fill="#e12626"/>
<rect x="514.14" y="301.39" width="2.55" height="1.09" fill="#ffad0f"/>
<rect x="514.14" y="276.37" width="2.55" height="25.02" fill="#d3e21f"/>
<rect x="516.92" y="327.72" width="2.55" height="36.38" fill="#4cbf8c"/>
<rect x="516.92" y="310.31" width="2.55" height="17.41" fill="#e12626"/>
<rect x="516.92" y="309.22" width="2.55" height="1.09" fill="#ffad0f"/>
<rect x="516.92" y="282.46" width="2.55" height="26.76" fill="#d3e21f"/>
<rect x="519.71" y="327.07" width="2.55" height="37.03" fill="#4cbf8c"/>
<rect x="519.71" y="304.22" width="2.55" height="22.85" fill="#e12626"/>
<rect x="519.71" y="303.13" width="2.55" height="1.09" fill="#ffad0f"/>
<rect x="519.71" y="277.02" width="2.55" height="26.11" fill="#d3e21f"/>
<rect x="522.50" y="328.15" width="2.55" height="35.95" fill="#4cbf8c"/>
<rect x="522.50" y="300.96" width="2.55" height="27.20" fill="#e12626"/>
<rect x="522.50" y="299.87" width="2.55" height="1.09" fill="#ffad0f"/>
<rect x="522.50" y="273.76" width="2.55" height="26.11" fill="#d3e21f"/>
<rect x="525.29" y="327.07" width="2.55" height="37.03" fill="#4cbf8c"/>
<rect x="525.29" y="301.61" width="2.55" height="25.46" fill="#e12626"/>
<rect x="525.29" y="300.52" width="2.55" height="1.09" fill="#ffad0f"/>
<rect x="525.29" y="275.50" width="2.55" height="25.02" fill="#d3e21f"/>
<rect x="528.08" y="327.07" width="2.55" height="37.03" fill="#4cbf8c"/>
<rect x="528.08" y="301.61" width="2.55" height="25.46" fill="#e12626"/>
<rect x="528.08" y="300.52" width="2.55" height="1.09" fill="#ffad0f"/>
<rect x="528.08" y="275.50" width="2.55" height="25.02" fill="#d3e21f"/>
<rect x="530.87" y="327.07" width="2.55" height="37.03" fill="#4cbf8c"/>
<rect x="530.87" y="304.22" width="2.55" height="22.85" fill="#e12626"/>
<rect x="530.87" y="303.13" width="2.55" height="1.09" fill="#ffad0f"/>
<rect x="530.87" y="278.54" width="2.55" height="24.59" fill="#d3e21f"/>
<rect x="533.65" y="327.72" width="2.55" height="36.38" fill="#4cbf8c"/>
<rect x="533.65" y="305.31" width="2.55" height="22.41" fill="#e12626"/>
<rect x="533.65" y="304.22" width="2.55" height="1.09" fill="#ffad0f"/>
<rect x="533.65" y="279.20" width="2.55" height="25.02" fill="#d3e21f"/>
<rect x="536.44" y="328.15" width="2.55" height="35.95" fill="#4cbf8c"/>
<rect x="536.44" y="305.96" width="2.55" height="22.19" fill="#e12626"/>
<rect x="536.44" y="304.87" width="2.55" height="1.09" fill="#ffad0f"/>
<rect x="536.44" y="279.85" width="2.55" height="25.02" fill="#d3e21f"/>
<rect x="539.23" y="329.24" width="2.55" height="34.86" fill="#4cbf8c"/>
<rect x="539.23" y="306.83" width="2.55" height="22.41" fill="#e12626"/>
<rect x="539.23" y="305.74" width="2.55" height="1.09" fill="#ffad0f"/>
<rect x="539.23" y="281.37" width="2.55" height="24.37" fill="#d3e21f"/>
<rect x="542.02" y="329.89" width="2.55" height="34.21" fill="#4cbf8c"/>
<rect x="542.02" y="308.14" width="2.55" height="21.76" fill="#e12626"/>
<rect x="542.02" y="307.05" width="2.55" height="1.09" fill="#ffad0f"/>
<rect x="542.02" y="282.46" width="2.55" height="24.59" fill="#d3e21f"/>
<rect x="544.80" y="330.33" width="2.55" height="33.77" fill="#4cbf8c"/>
<rect x="544.80" y="308.57" width="2.55" height="21.76" fill="#e12626"/>
<rect x="544.80" y="307.48" width="2.55" height="1.09" fill="#ffad0f"/>
<rect x="544.80" y="282.90" width="2.55" height="24.59" fill="#d3e21f"/>
<rect x="547.59" y="331.59" width="2.55" height="32.51" fill="#4cbf8c"/>
<rect x="547.59" y="308.31" width="2.55" height="23.28" fill="#e12626"/>
<rect x="547.59" y="307.22" width="2.55" height="1.09" fill="#ffad0f"/>
<rect x="547.59" y="282.64" width="2.55" height="24.59" fill="#d3e21f"/>
<rect x="550.38" y="332.68" width="2.55" height="31.42" fill="#4cbf8c"/>
<rect x="550.38" y="311.36" width="2.55" height="21.32" fill="#e12626"/>
<rect x="550.38" y="310.27" width="2.55" height="1.09" fill="#ffad0f"/>
<rect x="550.38" y="285.25" width="2.55" height="25.02" fill="#d3e21f"/>
<rect x="553.17" y="332.68" width="2.55" height="31.42" fill="#4cbf8c"/>
<rect x="553.17" y="312.01" width="2.55" height="20.67" fill="#e12626"/>
<rect x="553.17" y="310.92" width="2.55" height="1.09" fill="#ffad0f"/>
<rect x="553.17" y="285.90" width="2.55" height="25.02" fill="#d3e21f"/>
<rect x="555.96" y="333.12" width="2.55" height="30.98" fill="#4cbf8c"/>
<rect x="555.96" y="312.01" width="2.55" height="21.11" fill="#e12626"/>
<rect x="555.96" y="310.92" width="2.55" height="1.09" fill="#ffad0f"/>
<rect x="555.96" y="285.90" width="2.55" height="25.02" fill="#d3e21f"/>
<rect x="558.75" y="330.50" width="2.55" height="33.60" fill="#4cbf8c"/>
<rect x="558.75" y="310.92" width="2.55" height="19.58" fill="#e12626"/>
<rect x="558.75" y="309.83" width="2.55" height="1.09" fill="#ffad0f"/>
<rect x="558.75" y="283.72" width="2.55" height="26.11" fill="#d3e21f"/>
<rect x="561.53" y="328.76" width="2.55" height="35.34" fill="#4cbf8c"/>
<rect x="561.53" y="309.83" width="2.55" height="18.93" fill="#e12626"/>
<rect x="561.53" y="308.75" width="2.55" height="1.09" fill="#ffad0f"/>
<rect x="561.53" y="283.72" width="2.55" height="25.02" fill="#d3e21f"/>
<rect x="564.32" y="323.54" width="2.55" height="40.56" fill="#4cbf8c"/>
<rect x="564.32" y="302.65" width="2.55" height="20.89" fill="#e12626"/>
<rect x="564.32" y="301.57" width="2.55" height="1.09" fill="#ffad0f"/>
<rect x="564.32" y="275.02" width="2.55" height="26.54" fill="#d3e21f"/>
<rect x="567.11" y="324.41" width="2.55" height="39.69" fill="#4cbf8c"/>
<rect x="567.11" y="303.31" width="2.55" height="21.11" fill="#e12626"/>
<rect x="567.11" y="302.22" width="2.55" height="1.09" fill="#ffad0f"/>
<rect x="567.11" y="277.20" width="2.55" height="25.02" fill="#d3e21f"/>
<rect x="569.90" y="325.72" width="2.55" height="38.38" fill="#4cbf8c"/>
<rect x="569.90" y="306.14" width="2.55" height="19.58" fill="#e12626"/>
<rect x="569.90" y="305.05" width="2.55" height="1.09" fill="#ffad0f"/>
<rect x="569.90" y="279.37" width="2.55" height="25.67" fill="#d3e21f"/>
<rect x="572.68" y="323.54" width="2.55" height="40.56" fill="#4cbf8c"/>
<rect x="572.68" y="301.13" width="2.55" height="22.41" fill="#e12626"/>
<rect x="572.68" y="300.04" width="2.55" height="1.09" fill="#ffad0f"/>
<rect x="572.68" y="276.11" width="2.55" height="23.93" fill="#d3e21f"/>
<rect x="575.47" y="320.71" width="2.55" height="43.39" fill="#4cbf8c"/>
<rect x="575.47" y="299.61" width="2.55" height="21.11" fill="#e12626"/>
<rect x="575.47" y="298.52" width="2.55" height="1.09" fill="#ffad0f"/>
<rect x="575.47" y="273.50" width="2.55" height="25.02" fill="#d3e21f"/>
<rect x="578.26" y="317.01" width="2.55" height="47.09" fill="#4cbf8c"/>
<rect x="578.26" y="294.60" width="2.55" height="22.41" fill="#e12626"/>
<rect x="578.26" y="293.52" width="2.55" height="1.09" fill="#ffad0f"/>
<rect x="578.26" y="269.15" width="2.55" height="24.37" fill="#d3e21f"/>
<rect x="581.05" y="320.71" width="2.55" height="43.39" fill="#4cbf8c"/>
<rect x="581.05" y="296.78" width="2.55" height="23.93" fill="#e12626"/>
<rect x="581.05" y="295.69" width="2.55" height="1.09" fill="#ffad0f"/>
<rect x="581.05" y="270.02" width="2.55" height="25.67" fill="#d3e21f"/>
<rect x="583.84" y="321.80" width="2.55" height="42.30" fill="#4cbf8c"/>
<rect x="583.84" y="303.31" width="2.55" height="18.49" fill="#e12626"/>
<rect x="583.84" y="302.22" width="2.55" height="1.09" fill="#ffad0f"/>
<rect x="583.84" y="268.49" width="2.55" height="33.72" fill="#d3e21f"/>
<rect x="586.62" y="321.37" width="2.55" height="42.73" fill="#4cbf8c"/>
<rect x="586.62" y="303.31" width="2.55" height="18.06" fill="#e12626"/>
<rect x="586.62" y="302.22" width="2.55" height="1.09" fill="#ffad0f"/>
<rect x="586.62" y="266.32" width="2.55" height="35.90" fill="#d3e21f"/>
<rect x="589.41" y="319.19" width="2.55" height="44.91" fill="#4cbf8c"/>
<rect x="589.41" y="292.43" width="2.55" height="26.76" fill="#e12626"/>
<rect x="589.41" y="291.34" width="2.55" height="1.09" fill="#ffad0f"/>
<rect x="589.41" y="265.23" width="2.55" height="26.11" fill="#d3e21f"/>
<rect x="592.20" y="316.36" width="2.55" height="47.74" fill="#4cbf8c"/>
<rect x="592.20" y="289.16" width="2.55" height="27.20" fill="#e12626"/>
<rect x="592.20" y="288.08" width="2.55" height="1.09" fill="#ffad0f"/>
<rect x="592.20" y="261.97" width="2.55" height="26.11" fill="#d3e21f"/>
<rect x="594.99" y="309.83" width="2.55" height="54.27" fill="#4cbf8c"/>
<rect x="594.99" y="283.72" width="2.55" height="26.11" fill="#e12626"/>
<rect x="594.99" y="282.64" width="2.55" height="1.09" fill="#ffad0f"/>
<rect x="594.99" y="253.92" width="2.55" height="28.72" fill="#d3e21f"/>
<rect x="597.78" y="317.89" width="2.55" height="46.21" fill="#4cbf8c"/>
<rect x="597.78" y="290.25" width="2.55" height="27.63" fill="#e12626"/>
<rect x="597.78" y="289.16" width="2.55" height="1.09" fill="#ffad0f"/>
<rect x="597.78" y="259.14" width="2.55" height="30.03" fill="#d3e21f"/>
<rect x="600.56" y="316.36" width="2.55" height="47.74" fill="#4cbf8c"/>
<rect x="600.56" y="286.55" width="2.55" height="29.81" fill="#e12626"/>
<rect x="600.56" y="285.47" width="2.55" height="1.09" fill="#ffad0f"/>
<rect x="600.56" y="259.79" width="2.55" height="25.67" fill="#d3e21f"/>
<rect x="603.35" y="315.71" width="2.55" height="48.39" fill="#4cbf8c"/>
<rect x="603.35" y="285.25" width="2.55" height="30.46" fill="#e12626"/>
<rect x="603.35" y="284.16" width="2.55" height="1.09" fill="#ffad0f"/>
<rect x="603.35" y="260.23" width="2.55" height="23.93" fill="#d3e21f"/>
<rect x="606.14" y="316.37" width="2.55" height="47.73" fill="#4cbf8c"/>
<rect x="606.14" y="286.78" width="2.55" height="29.59" fill="#e12626"/>
<rect x="606.14" y="285.69" width="2.55" height="1.09" fill="#ffad0f"/>
<rect x="606.14" y="261.97" width="2.55" height="23.72" fill="#d3e21f"/>
<rect x="608.93" y="316.80" width="2.55" height="47.30" fill="#4cbf8c"/>
<rect x="608.93" y="287.43" width="2.55" height="29.37" fill="#e12626"/>
<rect x="608.93" y="286.34" width="2.55" height="1.09" fill="#ffad0f"/>
<rect x="608.93" y="262.84" width="2.55" height="23.50" fill="#d3e21f"/>
<rect x="611.72" y="316.80" width="2.55" height="47.30" fill="#4cbf8c"/>
<rect x="611.72" y="288.08" width="2.55" height="28.72" fill="#e12626"/>
<rect x="611.72" y="286.99" width="2.55" height="1.09" fill="#ffad0f"/>
<rect x="611.72" y="263.49" width="2.55" height="23.50" fill="#d3e21f"/>
<rect x="614.50" y="316.80" width="2.55" height="47.30" fill="#4cbf8c"/>
<rect x="614.50" y="288.52" width="2.55" height="28.29" fill="#e12626"/>
<rect x="614.50" y="287.43" width="2.55" height="1.09" fill="#ffad0f"/>
<rect x="614.50" y="263.49" width="2.55" height="23.93" fill="#d3e21f"/>
<rect x="617.29" y="317.24" width="2.55" height="46.86" fill="#4cbf8c"/>
<rect x="617.29" y="288.95" width="2.55" height="28.29" fill="#e12626"/>
<rect x="617.29" y="287.86" width="2.55" height="1.09" fill="#ffad0f"/>
<rect x="617.29" y="264.15" width="2.55" height="23.72" fill="#d3e21f"/>
<rect x="620.08" y="317.24" width="2.55" height="46.86" fill="#4cbf8c"/>
<rect x="620.08" y="289.60" width="2.55" height="27.63" fill="#e12626"/>
<rect x="620.08" y="288.52" width="2.55" height="1.09" fill="#ffad0f"/>
<rect x="620.08" y="264.15" width="2.55" height="24.37" fill="#d3e21f"/>
<rect x="622.87" y="317.24" width="2.55" height="46.86" fill="#4cbf8c"/>
<rect x="622.87" y="289.60" width="2.55" height="27.63" fill="#e12626"/>
<rect x="622.87" y="288.52" width="2.55" height="1.09" fill="#ffad0f"/>
<rect x="622.87" y="264.15" width="2.55" height="24.37" fill="#d3e21f"/>
<rect x="625.66" y="317.24" width="2.55" height="46.86" fill="#4cbf8c"/>
<rect x="625.66" y="290.69" width="2.55" height="26.54" fill="#e12626"/>
<rect x="625.66" y="289.60" width="2.55" height="1.09" fill="#ffad0f"/>
<rect x="625.66" y="265.67" width="2.55" height="23.93" fill="#d3e21f"/>
<rect x="628.44" y="317.24" width="2.55" height="46.86" fill="#4cbf8c"/>
<rect x="628.44" y="291.13" width="2.55" height="26.11" fill="#e12626"/>
<rect x="628.44" y="290.04" width="2.55" height="1.09" fill="#ffad0f"/>
<rect x="628.44" y="265.67" width="2.55" height="24.37" fill="#d3e21f"/>
<rect x="631.23" y="316.37" width="2.55" height="47.73" fill="#4cbf8c"/>
<rect x="631.23" y="289.60" width="2.55" height="26.76" fill="#e12626"/>
<rect x="631.23" y="288.52" width="2.55" height="1.09" fill="#ffad0f"/>
<rect x="631.23" y="263.49" width="2.55" height="25.02" fill="#d3e21f"/>
<rect x="634.02" y="315.06" width="2.55" height="49.04" fill="#4cbf8c"/>
<rect x="634.02" y="288.08" width="2.55" height="26.98" fill="#e12626"/>
<rect x="634.02" y="286.99" width="2.55" height="1.09" fill="#ffad0f"/>
<rect x="634.02" y="262.41" width="2.55" height="24.59" fill="#d3e21f"/>
<rect x="636.81" y="315.06" width="2.55" height="49.04" fill="#4cbf8c"/>
<rect x="636.81" y="287.43" width="2.55" height="27.63" fill="#e12626"/>
<rect x="636.81" y="286.34" width="2.55" height="1.09" fill="#ffad0f"/>
<rect x="636.81" y="262.41" width="2.55" height="23.93" fill="#d3e21f"/>
<rect x="639.60" y="314.63" width="2.55" height="49.47" fill="#4cbf8c"/>
<rect x="639.60" y="285.25" width="2.55" height="29.37" fill="#e12626"/>
<rect x="639.60" y="284.16" width="2.55" height="1.09" fill="#ffad0f"/>
<rect x="639.60" y="259.80" width="2.55" height="24.37" fill="#d3e21f"/>
<rect x="642.38" y="314.19" width="2.55" height="49.91" fill="#4cbf8c"/>
<rect x="642.38" y="284.16" width="2.55" height="30.03" fill="#e12626"/>
<rect x="642.38" y="283.08" width="2.55" height="1.09" fill="#ffad0f"/>
<rect x="642.38" y="258.49" width="2.55" height="24.59" fill="#d3e21f"/>
<rect x="645.17" y="313.54" width="2.55" height="50.56" fill="#4cbf8c"/>
<rect x="645.17" y="281.99" width="2.55" height="31.55" fill="#e12626"/>
<rect x="645.17" y="280.90" width="2.55" height="1.09" fill="#ffad0f"/>
<rect x="645.17" y="255.44" width="2.55" height="25.46" fill="#d3e21f"/>
<rect x="647.96" y="312.89" width="2.55" height="51.21" fill="#4cbf8c"/>
<rect x="647.96" y="280.90" width="2.55" height="31.98" fill="#e12626"/>
<rect x="647.96" y="279.81" width="2.55" height="1.09" fill="#ffad0f"/>
<rect x="647.96" y="254.14" width="2.55" height="25.67" fill="#d3e21f"/>
<rect x="650.75" y="313.54" width="2.55" height="50.56" fill="#4cbf8c"/>
<rect x="650.75" y="283.73" width="2.55" height="29.81" fill="#e12626"/>
<rect x="650.75" y="282.64" width="2.55" height="1.09" fill="#ffad0f"/>
<rect x="650.75" y="256.97" width="2.55" height="25.67" fill="#d3e21f"/>
<rect x="653.54" y="314.19" width="2.55" height="49.91" fill="#4cbf8c"/>
<rect x="653.54" y="288.52" width="2.55" height="25.67" fill="#e12626"/>
<rect x="653.54" y="287.43" width="2.55" height="1.09" fill="#ffad0f"/>
<rect x="653.54" y="266.76" width="2.55" height="20.67" fill="#d3e21f"/>
<rect x="656.32" y="312.45" width="2.55" height="51.65" fill="#4cbf8c"/>
<rect x="656.32" y="286.34" width="2.55" height="26.11" fill="#e12626"/>
<rect x="656.32" y="285.25" width="2.55" height="1.09" fill="#ffad0f"/>
<rect x="656.32" y="265.02" width="2.55" height="20.23" fill="#d3e21f"/>
<rect x="659.11" y="311.20" width="2.55" height="52.90" fill="#4cbf8c"/>
<rect x="659.11" y="286.35" width="2.55" height="24.86" fill="#e12626"/>
<rect x="659.11" y="285.20" width="2.55" height="1.15" fill="#ffad0f"/>
<rect x="659.11" y="259.88" width="2.55" height="25.32" fill="#d3e21f"/>
<rect x="661.90" y="313.96" width="2.55" height="50.14" fill="#4cbf8c"/>
<rect x="661.90" y="286.81" width="2.55" height="27.16" fill="#e12626"/>
<rect x="661.90" y="285.66" width="2.55" height="1.15" fill="#ffad0f"/>
<rect x="661.90" y="259.88" width="2.55" height="25.78" fill="#d3e21f"/>
<rect x="664.69" y="315.12" width="2.55" height="48.98" fill="#4cbf8c"/>
<rect x="664.69" y="287.50" width="2.55" height="27.62" fill="#e12626"/>
<rect x="664.69" y="286.35" width="2.55" height="1.15" fill="#ffad0f"/>
<rect x="664.69" y="261.03" width="2.55" height="25.32" fill="#d3e21f"/>
<rect x="667.48" y="306.60" width="2.55" height="57.50" fill="#4cbf8c"/>
<rect x="667.48" y="277.14" width="2.55" height="29.46" fill="#e12626"/>
<rect x="667.48" y="275.99" width="2.55" height="1.15" fill="#ffad0f"/>
<rect x="667.48" y="250.67" width="2.55" height="25.32" fill="#d3e21f"/>
<rect x="670.26" y="308.21" width="2.55" height="55.89" fill="#4cbf8c"/>
<rect x="670.26" y="280.59" width="2.55" height="27.62" fill="#e12626"/>
<rect x="670.26" y="279.44" width="2.55" height="1.15" fill="#ffad0f"/>
<rect x="670.26" y="254.13" width="2.55" height="25.32" fill="#d3e21f"/>
<rect x="673.05" y="309.82" width="2.55" height="54.28" fill="#4cbf8c"/>
<rect x="673.05" y="284.04" width="2.55" height="25.78" fill="#e12626"/>
<rect x="673.05" y="282.89" width="2.55" height="1.15" fill="#ffad0f"/>
<rect x="673.05" y="257.58" width="2.55" height="25.32" fill="#d3e21f"/>
<rect x="675.84" y="309.82" width="2.55" height="54.28" fill="#4cbf8c"/>
<rect x="675.84" y="284.51" width="2.55" height="25.32" fill="#e12626"/>
<rect x="675.84" y="283.35" width="2.55" height="1.15" fill="#ffad0f"/>
<rect x="675.84" y="258.27" width="2.55" height="25.09" fill="#d3e21f"/>
<rect x="678.63" y="309.82" width="2.55" height="54.28" fill="#4cbf8c"/>
<rect x="678.63" y="284.51" width="2.55" height="25.32" fill="#e12626"/>
<rect x="678.63" y="283.35" width="2.55" height="1.15" fill="#ffad0f"/>
<rect x="678.63" y="258.27" width="2.55" height="25.09" fill="#d3e21f"/>
<rect x="681.42" y="309.82" width="2.55" height="54.28" fill="#4cbf8c"/>
<rect x="681.42" y="285.20" width="2.55" height="24.63" fill="#e12626"/>
<rect x="681.42" y="284.04" width="2.55" height="1.15" fill="#ffad0f"/>
<rect x="681.42" y="258.27" width="2.55" height="25.78" fill="#d3e21f"/>
<rect x="684.20" y="309.82" width="2.55" height="54.28" fill="#4cbf8c"/>
<rect x="684.20" y="284.51" width="2.55" height="25.32" fill="#e12626"/>
<rect x="684.20" y="283.35" width="2.55" height="1.15" fill="#ffad0f"/>
<rect x="684.20" y="259.19" width="2.55" height="24.17" fill="#d3e21f"/>
<rect x="686.99" y="309.82" width="2.55" height="54.28" fill="#4cbf8c"/>
<rect x="686.99" y="288.19" width="2.55" height="21.63" fill="#e12626"/>
<rect x="686.99" y="287.04" width="2.55" height="1.15" fill="#ffad0f"/>
<rect x="686.99" y="262.18" width="2.55" height="24.86" fill="#d3e21f"/>
<rect x="689.78" y="307.06" width="2.55" height="57.04" fill="#4cbf8c"/>
<rect x="689.78" y="282.89" width="2.55" height="24.17" fill="#e12626"/>
<rect x="689.78" y="281.74" width="2.55" height="1.15" fill="#ffad0f"/>
<rect x="689.78" y="261.03" width="2.55" height="20.71" fill="#d3e21f"/>
<rect x="692.57" y="303.61" width="2.55" height="60.49" fill="#4cbf8c"/>
<rect x="692.57" y="280.59" width="2.55" height="23.01" fill="#e12626"/>
<rect x="692.57" y="279.44" width="2.55" height="1.15" fill="#ffad0f"/>
<rect x="692.57" y="255.28" width="2.55" height="24.17" fill="#d3e21f"/>
<rect x="695.36" y="298.31" width="2.55" height="65.79" fill="#4cbf8c"/>
<rect x="695.36" y="273.69" width="2.55" height="24.63" fill="#e12626"/>
<rect x="695.36" y="272.54" width="2.55" height="1.15" fill="#ffad0f"/>
<rect x="695.36" y="248.37" width="2.55" height="24.17" fill="#d3e21f"/>
<rect x="698.14" y="295.09" width="2.55" height="69.01" fill="#4cbf8c"/>
<rect x="698.14" y="275.99" width="2.55" height="19.10" fill="#e12626"/>
<rect x="698.14" y="274.84" width="2.55" height="1.15" fill="#ffad0f"/>
<rect x="698.14" y="249.52" width="2.55" height="25.32" fill="#d3e21f"/>
<rect x="700.93" y="288.65" width="2.55" height="75.45" fill="#4cbf8c"/>
<rect x="700.93" y="261.03" width="2.55" height="27.62" fill="#e12626"/>
<rect x="700.93" y="259.88" width="2.55" height="1.15" fill="#ffad0f"/>
<rect x="700.93" y="235.71" width="2.55" height="24.17" fill="#d3e21f"/>
<rect x="703.72" y="290.95" width="2.55" height="73.15" fill="#4cbf8c"/>
<rect x="703.72" y="263.33" width="2.55" height="27.62" fill="#e12626"/>
<rect x="703.72" y="262.18" width="2.55" height="1.15" fill="#ffad0f"/>
<rect x="703.72" y="238.01" width="2.55" height="24.17" fill="#d3e21f"/>
<rect x="706.51" y="288.65" width="2.55" height="75.45" fill="#4cbf8c"/>
<rect x="706.51" y="261.03" width="2.55" height="27.62" fill="#e12626"/>
<rect x="706.51" y="259.88" width="2.55" height="1.15" fill="#ffad0f"/>
<rect x="706.51" y="235.71" width="2.55" height="24.17" fill="#d3e21f"/>
<rect x="709.30" y="284.04" width="2.55" height="80.06" fill="#4cbf8c"/>
<rect x="709.30" y="255.28" width="2.55" height="28.77" fill="#e12626"/>
<rect x="709.30" y="254.13" width="2.55" height="1.15" fill="#ffad0f"/>
<rect x="709.30" y="229.96" width="2.55" height="24.17" fill="#d3e21f"/>
<rect x="712.08" y="279.44" width="2.55" height="84.66" fill="#4cbf8c"/>
<rect x="712.08" y="250.67" width="2.55" height="28.77" fill="#e12626"/>
<rect x="712.08" y="249.52" width="2.55" height="1.15" fill="#ffad0f"/>
<rect x="712.08" y="231.57" width="2.55" height="17.95" fill="#d3e21f"/>
<rect x="714.87" y="275.40" width="2.55" height="88.70" fill="#4cbf8c"/>
<rect x="714.87" y="240.30" width="2.55" height="35.10" fill="#e12626"/>
<rect x="714.87" y="238.80" width="2.55" height="1.50" fill="#ffad0f"/>
<rect x="714.87" y="215.10" width="2.55" height="23.70" fill="#d3e21f"/>
<rect x="717.66" y="274.90" width="2.55" height="89.20" fill="#4cbf8c"/>
<rect x="717.66" y="236.50" width="2.55" height="38.40" fill="#e12626"/>
<rect x="717.66" y="235.00" width="2.55" height="1.50" fill="#ffad0f"/>
<rect x="717.66" y="211.40" width="2.55" height="23.60" fill="#d3e21f"/>
<rect x="720.45" y="275.40" width="2.55" height="88.70" fill="#4cbf8c"/>
<rect x="720.45" y="234.00" width="2.55" height="41.40" fill="#e12626"/>
<rect x="720.45" y="232.50" width="2.55" height="1.50" fill="#ffad0f"/>
<rect x="720.45" y="209.60" width="2.55" height="22.90" fill="#d3e21f"/>
<rect x="723.24" y="276.70" width="2.55" height="87.40" fill="#4cbf8c"/>
<rect x="723.24" y="217.70" width="2.55" height="59.00" fill="#e12626"/>
<rect x="723.24" y="216.20" width="2.55" height="1.50" fill="#ffad0f"/>
<rect x="723.24" y="205.10" width="2.55" height="11.10" fill="#d3e21f"/>
<rect x="726.02" y="279.20" width="2.55" height="84.90" fill="#4cbf8c"/>
<rect x="726.02" y="225.20" width="2.55" height="54.00" fill="#e12626"/>
<rect x="726.02" y="223.70" width="2.55" height="1.50" fill="#ffad0f"/>
<rect x="726.02" y="191.30" width="2.55" height="32.40" fill="#d3e21f"/>
<rect x="728.81" y="279.20" width="2.55" height="84.90" fill="#4cbf8c"/>
<rect x="728.81" y="226.40" width="2.55" height="52.80" fill="#e12626"/>
<rect x="728.81" y="224.90" width="2.55" height="1.50" fill="#ffad0f"/>
<rect x="728.81" y="199.60" width="2.55" height="25.30" fill="#d3e21f"/>
<rect x="731.60" y="277.40" width="2.55" height="86.70" fill="#4cbf8c"/>
<rect x="731.60" y="215.10" width="2.55" height="62.30" fill="#e12626"/>
<rect x="731.60" y="213.60" width="2.55" height="1.50" fill="#ffad0f"/>
<rect x="731.60" y="188.80" width="2.55" height="24.80" fill="#d3e21f"/>
<rect x="734.39" y="275.40" width="2.55" height="88.70" fill="#4cbf8c"/>
<rect x="734.39" y="213.90" width="2.55" height="61.50" fill="#e12626"/>
<rect x="734.39" y="212.40" width="2.55" height="1.50" fill="#ffad0f"/>
<rect x="734.39" y="188.00" width="2.55" height="24.40" fill="#d3e21f"/>
<rect x="737.18" y="277.90" width="2.55" height="86.20" fill="#4cbf8c"/>
<rect x="737.18" y="217.70" width="2.55" height="60.20" fill="#e12626"/>
<rect x="737.18" y="216.20" width="2.55" height="1.50" fill="#ffad0f"/>
<rect x="737.18" y="191.30" width="2.55" height="24.90" fill="#d3e21f"/>
<rect x="739.96" y="281.70" width="2.55" height="82.40" fill="#4cbf8c"/>
<rect x="739.96" y="220.20" width="2.55" height="61.50" fill="#e12626"/>
<rect x="739.96" y="218.70" width="2.55" height="1.50" fill="#ffad0f"/>
<rect x="739.96" y="193.00" width="2.55" height="25.70" fill="#d3e21f"/>
<rect x="742.75" y="287.50" width="2.55" height="76.60" fill="#4cbf8c"/>
<rect x="742.75" y="225.20" width="2.55" height="62.30" fill="#e12626"/>
<rect x="742.75" y="223.70" width="2.55" height="1.50" fill="#ffad0f"/>
<rect x="742.75" y="199.00" width="2.55" height="24.70" fill="#d3e21f"/>
<rect x="745.54" y="289.20" width="2.55" height="74.90" fill="#4cbf8c"/>
<rect x="745.54" y="229.00" width="2.55" height="60.20" fill="#e12626"/>
<rect x="745.54" y="227.50" width="2.55" height="1.50" fill="#ffad0f"/>
<rect x="745.54" y="201.70" width="2.55" height="25.80" fill="#d3e21f"/>
<rect x="748.33" y="290.50" width="2.55" height="73.60" fill="#4cbf8c"/>
<rect x="748.33" y="231.50" width="2.55" height="59.00" fill="#e12626"/>
<rect x="748.33" y="230.00" width="2.55" height="1.50" fill="#ffad0f"/>
<rect x="748.33" y="206.40" width="2.55" height="23.60" fill="#d3e21f"/>
<rect x="751.12" y="290.50" width="2.55" height="73.60" fill="#4cbf8c"/>
<rect x="751.12" y="236.50" width="2.55" height="54.00" fill="#e12626"/>
<rect x="751.12" y="235.00" width="2.55" height="1.50" fill="#ffad0f"/>
<rect x="751.12" y="211.00" width="2.55" height="24.00" fill="#d3e21f"/>
<rect x="753.90" y="288.00" width="2.55" height="76.10" fill="#4cbf8c"/>
<rect x="753.90" y="232.70" width="2.55" height="55.30" fill="#e12626"/>
<rect x="753.90" y="231.20" width="2.55" height="1.50" fill="#ffad0f"/>
<rect x="753.90" y="206.40" width="2.55" height="24.80" fill="#d3e21f"/>
<rect x="756.69" y="290.50" width="2.55" height="73.60" fill="#4cbf8c"/>
<rect x="756.69" y="235.20" width="2.55" height="55.30" fill="#e12626"/>
<rect x="756.69" y="233.70" width="2.55" height="1.50" fill="#ffad0f"/>
<rect x="756.69" y="209.20" width="2.55" height="24.50" fill="#d3e21f"/>
<rect x="759.48" y="289.30" width="2.55" height="74.80" fill="#4cbf8c"/>
<rect x="759.48" y="235.20" width="2.55" height="54.10" fill="#e12626"/>
<rect x="759.48" y="233.70" width="2.55" height="1.50" fill="#ffad0f"/>
<rect x="759.48" y="209.20" width="2.55" height="24.50" fill="#d3e21f"/>
<rect x="762.27" y="276.90" width="2.55" height="87.20" fill="#4cbf8c"/>
<rect x="762.27" y="200.50" width="2.55" height="76.40" fill="#e12626"/>
<rect x="762.27" y="199.00" width="2.55" height="1.50" fill="#ffad0f"/>
<rect x="762.27" y="173.30" width="2.55" height="25.70" fill="#d3e21f"/>
<rect x="765.06" y="275.70" width="2.55" height="88.40" fill="#4cbf8c"/>
<rect x="765.06" y="195.00" width="2.55" height="80.70" fill="#e12626"/>
<rect x="765.06" y="193.50" width="2.55" height="1.50" fill="#ffad0f"/>
<rect x="765.06" y="169.60" width="2.55" height="23.90" fill="#d3e21f"/>
<rect x="767.84" y="278.00" width="2.55" height="86.10" fill="#4cbf8c"/>
<rect x="767.84" y="194.00" width="2.55" height="84.00" fill="#e12626"/>
<rect x="767.84" y="192.50" width="2.55" height="1.50" fill="#ffad0f"/>
<rect x="767.84" y="167.40" width="2.55" height="25.10" fill="#d3e21f"/>
<rect x="770.63" y="280.00" width="2.55" height="84.10" fill="#4cbf8c"/>
<rect x="770.63" y="199.40" width="2.55" height="80.60" fill="#e12626"/>
<rect x="770.63" y="197.90" width="2.55" height="1.50" fill="#ffad0f"/>
<rect x="770.63" y="172.20" width="2.55" height="25.70" fill="#d3e21f"/>
<rect x="773.42" y="276.60" width="2.55" height="87.50" fill="#4cbf8c"/>
<rect x="773.42" y="190.00" width="2.55" height="86.60" fill="#e12626"/>
<rect x="773.42" y="188.50" width="2.55" height="1.50" fill="#ffad0f"/>
<rect x="773.42" y="164.60" width="2.55" height="23.90" fill="#d3e21f"/>
<rect x="776.21" y="277.10" width="2.55" height="87.00" fill="#4cbf8c"/>
<rect x="776.21" y="195.00" width="2.55" height="82.10" fill="#e12626"/>
<rect x="776.21" y="193.50" width="2.55" height="1.50" fill="#ffad0f"/>
<rect x="776.21" y="168.30" width="2.55" height="25.20" fill="#d3e21f"/>
<rect x="779.00" y="279.50" width="2.55" height="84.60" fill="#4cbf8c"/>
<rect x="779.00" y="195.70" width="2.55" height="83.80" fill="#e12626"/>
<rect x="779.00" y="194.20" width="2.55" height="1.50" fill="#ffad0f"/>
<rect x="779.00" y="169.00" width="2.55" height="25.20" fill="#d3e21f"/>
<rect x="781.78" y="261.00" width="2.55" height="103.10" fill="#4cbf8c"/>
<rect x="781.78" y="163.50" width="2.55" height="97.50" fill="#e12626"/>
<rect x="781.78" y="162.00" width="2.55" height="1.50" fill="#ffad0f"/>
<rect x="781.78" y="137.40" width="2.55" height="24.60" fill="#d3e21f"/>
<rect x="784.57" y="261.50" width="2.55" height="102.60" fill="#4cbf8c"/>
<rect x="784.57" y="158.00" width="2.55" height="103.50" fill="#e12626"/>
<rect x="784.57" y="156.50" width="2.55" height="1.50" fill="#ffad0f"/>
<rect x="784.57" y="132.60" width="2.55" height="23.90" fill="#d3e21f"/>
<rect x="787.36" y="279.00" width="2.55" height="85.10" fill="#4cbf8c"/>
<rect x="787.36" y="160.30" width="2.55" height="118.70" fill="#e12626"/>
<rect x="787.36" y="158.80" width="2.55" height="1.50" fill="#ffad0f"/>
<rect x="787.36" y="136.30" width="2.55" height="22.50" fill="#d3e21f"/>
<rect x="790.15" y="261.90" width="2.55" height="102.20" fill="#4cbf8c"/>
<rect x="790.15" y="158.00" width="2.55" height="103.90" fill="#e12626"/>
<rect x="790.15" y="156.50" width="2.55" height="1.50" fill="#ffad0f"/>
<rect x="790.15" y="133.50" width="2.55" height="23.00" fill="#d3e21f"/>
<rect x="792.94" y="265.90" width="2.55" height="98.20" fill="#4cbf8c"/>
<rect x="792.94" y="158.70" width="2.55" height="107.20" fill="#e12626"/>
<rect x="792.94" y="157.20" width="2.55" height="1.50" fill="#ffad0f"/>
<rect x="792.94" y="133.00" width="2.55" height="24.20" fill="#d3e21f"/>
<rect x="795.72" y="280.00" width="2.55" height="84.10" fill="#4cbf8c"/>
<rect x="795.72" y="171.10" width="2.55" height="108.90" fill="#e12626"/>
<rect x="795.72" y="169.60" width="2.55" height="1.50" fill="#ffad0f"/>
<rect x="795.72" y="145.00" width="2.55" height="24.60" fill="#d3e21f"/>
<rect x="798.51" y="280.00" width="2.55" height="84.10" fill="#4cbf8c"/>
<rect x="798.51" y="172.20" width="2.55" height="107.80" fill="#e12626"/>
<rect x="798.51" y="170.70" width="2.55" height="1.50" fill="#ffad0f"/>
<rect x="798.51" y="146.10" width="2.55" height="24.60" fill="#d3e21f"/>
<rect x="801.30" y="280.00" width="2.55" height="84.10" fill="#4cbf8c"/>
<rect x="801.30" y="171.10" width="2.55" height="108.90" fill="#e12626"/>
<rect x="801.30" y="169.60" width="2.55" height="1.50" fill="#ffad0f"/>
<rect x="801.30" y="145.00" width="2.55" height="24.60" fill="#d3e21f"/>
<rect x="804.09" y="265.90" width="2.55" height="98.20" fill="#4cbf8c"/>
<rect x="804.09" y="156.60" width="2.55" height="109.30" fill="#e12626"/>
<rect x="804.09" y="155.10" width="2.55" height="1.50" fill="#ffad0f"/>
<rect x="804.09" y="131.30" width="2.55" height="23.80" fill="#d3e21f"/>
<rect x="806.88" y="265.90" width="2.55" height="98.20" fill="#4cbf8c"/>
<rect x="806.88" y="148.30" width="2.55" height="117.60" fill="#e12626"/>
<rect x="806.88" y="146.80" width="2.55" height="1.50" fill="#ffad0f"/>
<rect x="806.88" y="122.60" width="2.55" height="24.20" fill="#d3e21f"/>
<rect x="809.66" y="266.30" width="2.55" height="97.80" fill="#4cbf8c"/>
<rect x="809.66" y="162.40" width="2.55" height="103.90" fill="#e12626"/>
<rect x="809.66" y="160.90" width="2.55" height="1.50" fill="#ffad0f"/>
<rect x="809.66" y="137.00" width="2.55" height="23.90" fill="#d3e21f"/>
<rect x="812.45" y="266.30" width="2.55" height="97.80" fill="#4cbf8c"/>
<rect x="812.45" y="164.60" width="2.55" height="101.70" fill="#e12626"/>
<rect x="812.45" y="163.10" width="2.55" height="1.50" fill="#ffad0f"/>
<rect x="812.45" y="140.70" width="2.55" height="22.40" fill="#d3e21f"/>
<rect x="815.24" y="266.60" width="2.55" height="97.50" fill="#4cbf8c"/>
<rect x="815.24" y="169.30" width="2.55" height="97.30" fill="#e12626"/>
<rect x="815.24" y="167.80" width="2.55" height="1.50" fill="#ffad0f"/>
<rect x="815.24" y="142.80" width="2.55" height="25.00" fill="#d3e21f"/>
<rect x="818.03" y="267.80" width="2.55" height="96.30" fill="#4cbf8c"/>
<rect x="818.03" y="170.00" width="2.55" height="97.80" fill="#e12626"/>
<rect x="818.03" y="168.50" width="2.55" height="1.50" fill="#ffad0f"/>
<rect x="818.03" y="145.40" width="2.55" height="23.10" fill="#d3e21f"/>
<rect x="820.82" y="268.40" width="2.55" height="95.70" fill="#4cbf8c"/>
<rect x="820.82" y="171.50" width="2.55" height="96.90" fill="#e12626"/>
<rect x="820.82" y="170.00" width="2.55" height="1.50" fill="#ffad0f"/>
<rect x="820.82" y="146.90" width="2.55" height="23.10" fill="#d3e21f"/>
<rect x="823.60" y="268.80" width="2.55" height="95.30" fill="#4cbf8c"/>
<rect x="823.60" y="174.50" width="2.55" height="94.30" fill="#e12626"/>
<rect x="823.60" y="173.00" width="2.55" height="1.50" fill="#ffad0f"/>
<rect x="823.60" y="149.00" width="2.55" height="24.00" fill="#d3e21f"/>
<rect x="826.39" y="264.40" width="2.55" height="99.70" fill="#4cbf8c"/>
<rect x="826.39" y="165.70" width="2.55" height="98.70" fill="#e12626"/>
<rect x="826.39" y="164.20" width="2.55" height="1.50" fill="#ffad0f"/>
<rect x="826.39" y="140.60" width="2.55" height="23.60" fill="#d3e21f"/>
<rect x="829.18" y="255.60" width="2.55" height="108.50" fill="#4cbf8c"/>
<rect x="829.18" y="155.40" width="2.55" height="100.20" fill="#e12626"/>
<rect x="829.18" y="153.90" width="2.55" height="1.50" fill="#ffad0f"/>
<rect x="829.18" y="130.30" width="2.55" height="23.60" fill="#d3e21f"/>
<rect x="831.97" y="256.40" width="2.55" height="107.70" fill="#4cbf8c"/>
<rect x="831.97" y="153.20" width="2.55" height="103.20" fill="#e12626"/>
<rect x="831.97" y="151.70" width="2.55" height="1.50" fill="#ffad0f"/>
<rect x="831.97" y="127.80" width="2.55" height="23.90" fill="#d3e21f"/>
<rect x="834.76" y="256.60" width="2.55" height="107.50" fill="#4cbf8c"/>
<rect x="834.76" y="151.00" width="2.55" height="105.60" fill="#e12626"/>
<rect x="834.76" y="149.50" width="2.55" height="1.50" fill="#ffad0f"/>
<rect x="834.76" y="125.90" width="2.55" height="23.60" fill="#d3e21f"/>
<rect x="837.54" y="242.40" width="2.55" height="121.70" fill="#4cbf8c"/>
<rect x="837.54" y="132.50" width="2.55" height="109.90" fill="#e12626"/>
<rect x="837.54" y="131.00" width="2.55" height="1.50" fill="#ffad0f"/>
<rect x="837.54" y="106.90" width="2.55" height="24.10" fill="#d3e21f"/>
<rect x="840.33" y="236.10" width="2.55" height="128.00" fill="#4cbf8c"/>
<rect x="840.33" y="123.40" width="2.55" height="112.70" fill="#e12626"/>
<rect x="840.33" y="121.90" width="2.55" height="1.50" fill="#ffad0f"/>
<rect x="840.33" y="98.10" width="2.55" height="23.80" fill="#d3e21f"/>
<rect x="843.12" y="252.30" width="2.55" height="111.80" fill="#4cbf8c"/>
<rect x="843.12" y="150.00" width="2.55" height="102.30" fill="#e12626"/>
<rect x="843.12" y="148.50" width="2.55" height="1.50" fill="#ffad0f"/>
<rect x="843.12" y="124.90" width="2.55" height="23.60" fill="#d3e21f"/>
<rect x="851.48" y="282.40" width="2.55" height="81.70" fill="#4cbf8c"/>
<rect x="851.48" y="237.30" width="2.55" height="45.10" fill="#e12626"/>
<rect x="854.27" y="293.30" width="2.55" height="70.80" fill="#4cbf8c"/>
<rect x="854.27" y="238.10" width="2.55" height="55.20" fill="#e12626"/>
<rect x="857.06" y="292.70" width="2.55" height="71.40" fill="#4cbf8c"/>
<rect x="857.06" y="214.80" width="2.55" height="77.90" fill="#e12626"/>
<rect x="859.85" y="279.00" width="2.55" height="85.10" fill="#4cbf8c"/>
<rect x="859.85" y="214.30" width="2.55" height="64.70" fill="#e12626"/>
<rect x="862.64" y="274.00" width="2.55" height="90.10" fill="#4cbf8c"/>
<rect x="862.64" y="225.80" width="2.55" height="48.20" fill="#e12626"/>
<rect x="865.42" y="288.60" width="2.55" height="75.50" fill="#4cbf8c"/>
<rect x="865.42" y="241.00" width="2.55" height="47.60" fill="#e12626"/>
<rect x="868.21" y="292.70" width="2.55" height="71.40" fill="#4cbf8c"/>
<rect x="868.21" y="242.70" width="2.55" height="50.00" fill="#e12626"/>
<rect x="871.00" y="293.70" width="2.55" height="70.40" fill="#4cbf8c"/>
<rect x="871.00" y="239.60" width="2.55" height="54.10" fill="#e12626"/>
<rect x="873.79" y="294.40" width="2.55" height="69.70" fill="#4cbf8c"/>
<rect x="873.79" y="211.30" width="2.55" height="83.10" fill="#e12626"/>
<rect x="876.58" y="280.50" width="2.55" height="83.60" fill="#4cbf8c"/>
<rect x="876.58" y="212.80" width="2.55" height="67.70" fill="#e12626"/>
<rect x="879.36" y="280.50" width="2.55" height="83.60" fill="#4cbf8c"/>
<rect x="879.36" y="227.20" width="2.55" height="53.30" fill="#e12626"/>
<rect x="882.15" y="280.50" width="2.55" height="83.60" fill="#4cbf8c"/>
<rect x="882.15" y="228.30" width="2.55" height="52.20" fill="#e12626"/>
<rect x="884.94" y="294.40" width="2.55" height="69.70" fill="#4cbf8c"/>
<rect x="884.94" y="245.00" width="2.55" height="49.40" fill="#e12626"/>
<rect x="887.73" y="294.00" width="2.55" height="70.10" fill="#4cbf8c"/>
<rect x="887.73" y="253.40" width="2.55" height="40.60" fill="#e12626"/>
<line x1="64.6" y1="86" x2="64.6" y2="364.6" stroke="#777" stroke-width="1.3"/>
<line x1="64" y1="364.1" x2="888" y2="364.1" stroke="#555" stroke-width="1.3"/>
<g font-size="9.1" fill="#3a3a3a"><text transform="translate(63.89,369.8) rotate(90) scale(1,0.95)" x="0" y="0">2022-02-07 00:00</text><line x1="65.40" y1="364.1" x2="65.40" y2="367" stroke="#999" stroke-width="0.8"/><text transform="translate(77.83,369.8) rotate(90) scale(1,0.95)" x="0" y="0">2022-02-07 05:00</text><line x1="79.34" y1="364.1" x2="79.34" y2="367" stroke="#999" stroke-width="0.8"/><text transform="translate(91.77,369.8) rotate(90) scale(1,0.95)" x="0" y="0">2022-02-07 10:00</text><line x1="93.28" y1="364.1" x2="93.28" y2="367" stroke="#999" stroke-width="0.8"/><text transform="translate(105.71,369.8) rotate(90) scale(1,0.95)" x="0" y="0">2022-02-07 15:00</text><line x1="107.22" y1="364.1" x2="107.22" y2="367" stroke="#999" stroke-width="0.8"/><text transform="translate(119.65,369.8) rotate(90) scale(1,0.95)" x="0" y="0">2022-02-07 20:00</text><line x1="121.16" y1="364.1" x2="121.16" y2="367" stroke="#999" stroke-width="0.8"/><text transform="translate(133.59,369.8) rotate(90) scale(1,0.95)" x="0" y="0">2022-02-08 01:00</text><line x1="135.10" y1="364.1" x2="135.10" y2="367" stroke="#999" stroke-width="0.8"/><text transform="translate(147.53,369.8) rotate(90) scale(1,0.95)" x="0" y="0">2022-02-08 06:00</text><line x1="149.04" y1="364.1" x2="149.04" y2="367" stroke="#999" stroke-width="0.8"/><text transform="translate(161.47,369.8) rotate(90) scale(1,0.95)" x="0" y="0">2022-02-08 11:00</text><line x1="162.98" y1="364.1" x2="162.98" y2="367" stroke="#999" stroke-width="0.8"/><text transform="translate(175.41,369.8) rotate(90) scale(1,0.95)" x="0" y="0">2022-02-08 16:00</text><line x1="176.92" y1="364.1" x2="176.92" y2="367" stroke="#999" stroke-width="0.8"/><text transform="translate(189.35,369.8) rotate(90) scale(1,0.95)" x="0" y="0">2022-02-08 21:00</text><line x1="190.86" y1="364.1" x2="190.86" y2="367" stroke="#999" stroke-width="0.8"/><text transform="translate(203.29,369.8) rotate(90) scale(1,0.95)" x="0" y="0">2022-02-09 02:00</text><line x1="204.80" y1="364.1" x2="204.80" y2="367" stroke="#999" stroke-width="0.8"/><text transform="translate(217.23,369.8) rotate(90) scale(1,0.95)" x="0" y="0">2022-02-09 07:00</text><line x1="218.74" y1="364.1" x2="218.74" y2="367" stroke="#999" stroke-width="0.8"/><text transform="translate(231.17,369.8) rotate(90) scale(1,0.95)" x="0" y="0">2022-02-09 12:00</text><line x1="232.68" y1="364.1" x2="232.68" y2="367" stroke="#999" stroke-width="0.8"/><text transform="translate(245.11,369.8) rotate(90) scale(1,0.95)" x="0" y="0">2022-02-09 17:00</text><line x1="246.62" y1="364.1" x2="246.62" y2="367" stroke="#999" stroke-width="0.8"/><text transform="translate(259.05,369.8) rotate(90) scale(1,0.95)" x="0" y="0">2022-02-09 22:00</text><line x1="260.56" y1="364.1" x2="260.56" y2="367" stroke="#999" stroke-width="0.8"/><text transform="translate(272.99,369.8) rotate(90) scale(1,0.95)" x="0" y="0">2022-02-10 03:00</text><line x1="274.50" y1="364.1" x2="274.50" y2="367" stroke="#999" stroke-width="0.8"/><text transform="translate(286.93,369.8) rotate(90) scale(1,0.95)" x="0" y="0">2022-02-10 08:00</text><line x1="288.44" y1="364.1" x2="288.44" y2="367" stroke="#999" stroke-width="0.8"/><text transform="translate(300.87,369.8) rotate(90) scale(1,0.95)" x="0" y="0">2022-02-10 13:00</text><line x1="302.38" y1="364.1" x2="302.38" y2="367" stroke="#999" stroke-width="0.8"/><text transform="translate(314.81,369.8) rotate(90) scale(1,0.95)" x="0" y="0">2022-02-10 18:00</text><line x1="316.32" y1="364.1" x2="316.32" y2="367" stroke="#999" stroke-width="0.8"/><text transform="translate(328.75,369.8) rotate(90) scale(1,0.95)" x="0" y="0">2022-02-10 23:00</text><line x1="330.26" y1="364.1" x2="330.26" y2="367" stroke="#999" stroke-width="0.8"/><text transform="translate(342.69,369.8) rotate(90) scale(1,0.95)" x="0" y="0">2022-02-11 04:00</text><line x1="344.20" y1="364.1" x2="344.20" y2="367" stroke="#999" stroke-width="0.8"/><text transform="translate(356.63,369.8) rotate(90) scale(1,0.95)" x="0" y="0">2022-02-11 09:00</text><line x1="358.14" y1="364.1" x2="358.14" y2="367" stroke="#999" stroke-width="0.8"/><text transform="translate(370.57,369.8) rotate(90) scale(1,0.95)" x="0" y="0">2022-02-11 14:00</text><line x1="372.08" y1="364.1" x2="372.08" y2="367" stroke="#999" stroke-width="0.8"/><text transform="translate(384.51,369.8) rotate(90) scale(1,0.95)" x="0" y="0">2022-02-11 19:00</text><line x1="386.02" y1="364.1" x2="386.02" y2="367" stroke="#999" stroke-width="0.8"/><text transform="translate(398.45,369.8) rotate(90) scale(1,0.95)" x="0" y="0">2022-02-12 00:00</text><line x1="399.96" y1="364.1" x2="399.96" y2="367" stroke="#999" stroke-width="0.8"/><text transform="translate(412.39,369.8) rotate(90) scale(1,0.95)" x="0" y="0">2022-02-12 05:00</text><line x1="413.90" y1="364.1" x2="413.90" y2="367" stroke="#999" stroke-width="0.8"/><text transform="translate(426.33,369.8) rotate(90) scale(1,0.95)" x="0" y="0">2022-02-12 10:00</text><line x1="427.84" y1="364.1" x2="427.84" y2="367" stroke="#999" stroke-width="0.8"/><text transform="translate(440.27,369.8) rotate(90) scale(1,0.95)" x="0" y="0">2022-02-12 15:00</text><line x1="441.78" y1="364.1" x2="441.78" y2="367" stroke="#999" stroke-width="0.8"/><text transform="translate(454.21,369.8) rotate(90) scale(1,0.95)" x="0" y="0">2022-02-12 20:00</text><line x1="455.72" y1="364.1" x2="455.72" y2="367" stroke="#999" stroke-width="0.8"/><text transform="translate(468.15,369.8) rotate(90) scale(1,0.95)" x="0" y="0">2022-02-13 01:00</text><line x1="469.66" y1="364.1" x2="469.66" y2="367" stroke="#999" stroke-width="0.8"/><text transform="translate(482.09,369.8) rotate(90) scale(1,0.95)" x="0" y="0">2022-02-13 06:00</text><line x1="483.60" y1="364.1" x2="483.60" y2="367" stroke="#999" stroke-width="0.8"/><text transform="translate(496.03,369.8) rotate(90) scale(1,0.95)" x="0" y="0">2022-02-13 11:00</text><line x1="497.54" y1="364.1" x2="497.54" y2="367" stroke="#999" stroke-width="0.8"/><text transform="translate(509.97,369.8) rotate(90) scale(1,0.95)" x="0" y="0">2022-02-13 16:00</text><line x1="511.48" y1="364.1" x2="511.48" y2="367" stroke="#999" stroke-width="0.8"/><text transform="translate(523.91,369.8) rotate(90) scale(1,0.95)" x="0" y="0">2022-02-13 21:00</text><line x1="525.42" y1="364.1" x2="525.42" y2="367" stroke="#999" stroke-width="0.8"/><text transform="translate(537.85,369.8) rotate(90) scale(1,0.95)" x="0" y="0">2022-02-14 02:00</text><line x1="539.36" y1="364.1" x2="539.36" y2="367" stroke="#999" stroke-width="0.8"/><text transform="translate(551.79,369.8) rotate(90) scale(1,0.95)" x="0" y="0">2022-02-14 07:00</text><line x1="553.30" y1="364.1" x2="553.30" y2="367" stroke="#999" stroke-width="0.8"/><text transform="translate(565.73,369.8) rotate(90) scale(1,0.95)" x="0" y="0">2022-02-14 12:00</text><line x1="567.24" y1="364.1" x2="567.24" y2="367" stroke="#999" stroke-width="0.8"/><text transform="translate(579.67,369.8) rotate(90) scale(1,0.95)" x="0" y="0">2022-02-14 17:00</text><line x1="581.18" y1="364.1" x2="581.18" y2="367" stroke="#999" stroke-width="0.8"/><text transform="translate(593.61,369.8) rotate(90) scale(1,0.95)" x="0" y="0">2022-02-14 22:00</text><line x1="595.12" y1="364.1" x2="595.12" y2="367" stroke="#999" stroke-width="0.8"/><text transform="translate(607.55,369.8) rotate(90) scale(1,0.95)" x="0" y="0">2022-02-15 03:00</text><line x1="609.06" y1="364.1" x2="609.06" y2="367" stroke="#999" stroke-width="0.8"/><text transform="translate(621.49,369.8) rotate(90) scale(1,0.95)" x="0" y="0">2022-02-15 08:00</text><line x1="623.00" y1="364.1" x2="623.00" y2="367" stroke="#999" stroke-width="0.8"/><text transform="translate(635.43,369.8) rotate(90) scale(1,0.95)" x="0" y="0">2022-02-15 13:00</text><line x1="636.94" y1="364.1" x2="636.94" y2="367" stroke="#999" stroke-width="0.8"/><text transform="translate(649.37,369.8) rotate(90) scale(1,0.95)" x="0" y="0">2022-02-15 18:00</text><line x1="650.88" y1="364.1" x2="650.88" y2="367" stroke="#999" stroke-width="0.8"/><text transform="translate(663.31,369.8) rotate(90) scale(1,0.95)" x="0" y="0">2022-02-15 23:00</text><line x1="664.82" y1="364.1" x2="664.82" y2="367" stroke="#999" stroke-width="0.8"/><text transform="translate(677.25,369.8) rotate(90) scale(1,0.95)" x="0" y="0">2022-02-16 04:00</text><line x1="678.76" y1="364.1" x2="678.76" y2="367" stroke="#999" stroke-width="0.8"/><text transform="translate(691.19,369.8) rotate(90) scale(1,0.95)" x="0" y="0">2022-02-16 09:00</text><line x1="692.70" y1="364.1" x2="692.70" y2="367" stroke="#999" stroke-width="0.8"/><text transform="translate(705.13,369.8) rotate(90) scale(1,0.95)" x="0" y="0">2022-02-16 14:00</text><line x1="706.64" y1="364.1" x2="706.64" y2="367" stroke="#999" stroke-width="0.8"/><text transform="translate(719.07,369.8) rotate(90) scale(1,0.95)" x="0" y="0">2022-02-16 19:00</text><line x1="720.58" y1="364.1" x2="720.58" y2="367" stroke="#999" stroke-width="0.8"/><text transform="translate(733.01,369.8) rotate(90) scale(1,0.95)" x="0" y="0">2022-02-17 00:00</text><line x1="734.52" y1="364.1" x2="734.52" y2="367" stroke="#999" stroke-width="0.8"/><text transform="translate(746.95,369.8) rotate(90) scale(1,0.95)" x="0" y="0">2022-02-17 05:00</text><line x1="748.46" y1="364.1" x2="748.46" y2="367" stroke="#999" stroke-width="0.8"/><text transform="translate(760.89,369.8) rotate(90) scale(1,0.95)" x="0" y="0">2022-02-17 10:00</text><line x1="762.40" y1="364.1" x2="762.40" y2="367" stroke="#999" stroke-width="0.8"/><text transform="translate(774.83,369.8) rotate(90) scale(1,0.95)" x="0" y="0">2022-02-17 15:00</text><line x1="776.34" y1="364.1" x2="776.34" y2="367" stroke="#999" stroke-width="0.8"/><text transform="translate(788.77,369.8) rotate(90) scale(1,0.95)" x="0" y="0">2022-02-17 20:00</text><line x1="790.28" y1="364.1" x2="790.28" y2="367" stroke="#999" stroke-width="0.8"/><text transform="translate(802.71,369.8) rotate(90) scale(1,0.95)" x="0" y="0">2022-02-18 01:00</text><line x1="804.22" y1="364.1" x2="804.22" y2="367" stroke="#999" stroke-width="0.8"/><text transform="translate(816.65,369.8) rotate(90) scale(1,0.95)" x="0" y="0">2022-02-18 06:00</text><line x1="818.16" y1="364.1" x2="818.16" y2="367" stroke="#999" stroke-width="0.8"/><text transform="translate(830.59,369.8) rotate(90) scale(1,0.95)" x="0" y="0">2022-02-18 11:00</text><line x1="832.10" y1="364.1" x2="832.10" y2="367" stroke="#999" stroke-width="0.8"/><text transform="translate(844.53,369.8) rotate(90) scale(1,0.95)" x="0" y="0">2022-02-18 16:00</text><line x1="846.04" y1="364.1" x2="846.04" y2="367" stroke="#999" stroke-width="0.8"/><text transform="translate(858.47,369.8) rotate(90) scale(1,0.95)" x="0" y="0">2022-02-18 21:00</text><line x1="859.98" y1="364.1" x2="859.98" y2="367" stroke="#999" stroke-width="0.8"/><text transform="translate(872.41,369.8) rotate(90) scale(1,0.95)" x="0" y="0">2022-02-19 02:00</text><line x1="873.92" y1="364.1" x2="873.92" y2="367" stroke="#999" stroke-width="0.8"/><text transform="translate(886.35,369.8) rotate(90) scale(1,0.95)" x="0" y="0">2022-02-19 07:00</text><line x1="887.86" y1="364.1" x2="887.86" y2="367" stroke="#999" stroke-width="0.8"/></g>
<rect x="46.9" y="444" width="841.1" height="19" fill="#efeffa"/>
<polyline points="47,459.4 82,459.4 83.5,457 250,456.8 500,455.5 640,455.4 696,452.6 730,452 770,451.2 825,451.5 832,453 835.5,459 838.5,454 845,453 888,453" fill="none" stroke="#d8d8e4" stroke-width="0.9"/>
<line x1="46.9" y1="443.5" x2="46.9" y2="463.5" stroke="#2a8de0" stroke-width="1"/>
<rect x="44.3" y="449" width="5.2" height="8.5" rx="1.2" fill="#1d8ce0"/>
<line x1="45.5" y1="452" x2="48.3" y2="452" stroke="#8cc3f0" stroke-width="0.6"/>
<line x1="45.5" y1="454.5" x2="48.3" y2="454.5" stroke="#8cc3f0" stroke-width="0.6"/>
</svg>
</div>
</body></html>
